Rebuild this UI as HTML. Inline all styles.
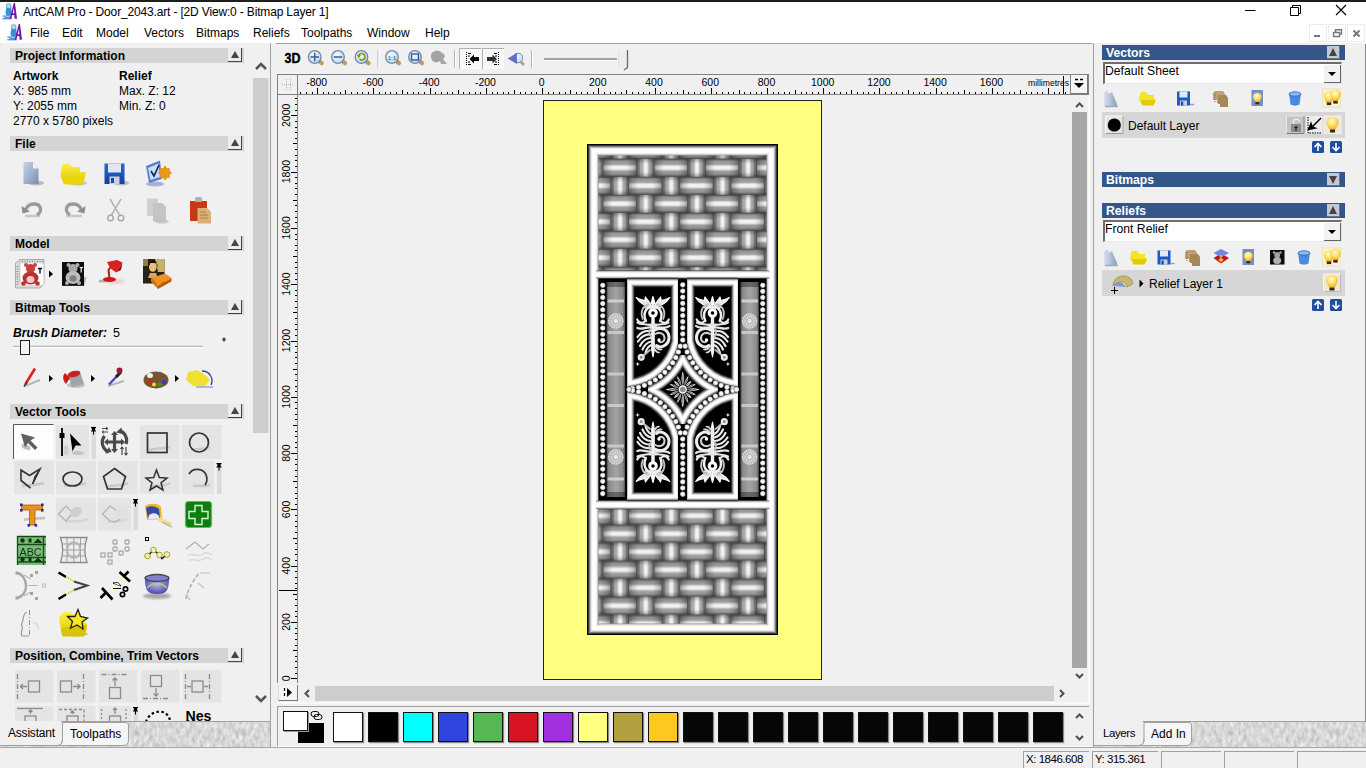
<!DOCTYPE html>
<html><head><meta charset="utf-8"><title>ArtCAM Pro - Door_2043.art</title>
<style>
*{box-sizing:border-box;margin:0;padding:0}
html,body{width:1366px;height:768px;overflow:hidden;background:#f0f0f0;font-family:"Liberation Sans",sans-serif;font-size:12px;color:#000}
.abs{position:absolute}
svg{position:absolute;overflow:visible}
#topline{left:0;top:0;width:1366px;height:2px;background:#1e1e1e}
#titlebar{left:0;top:2px;width:1366px;height:21px;background:#fff}
#menubar{left:0;top:23px;width:1366px;height:20px;background:#fff}
#title{left:23px;top:5px;font-size:12px;white-space:nowrap;letter-spacing:-0.16px}
.menu{top:26px;font-size:12px;white-space:nowrap}
#leftpanel{left:0;top:43px;width:271px;height:680px;background:#f0f0f0;border-right:1px solid #a0a0a0;overflow:hidden}
.hdr{position:absolute;left:10px;width:234px;height:15px;background:#d4d4d4;font-weight:bold;font-size:12px;line-height:16px;padding-left:5px;white-space:nowrap}
.hbtn{position:absolute;right:2px;top:0;width:14px;height:14px;background:#ececec;border-right:1px solid #444;border-bottom:1px solid #444}
.hbtn:after{content:"";position:absolute;left:2.5px;top:3px;border-left:4px solid transparent;border-right:4px solid transparent;border-bottom:7.5px solid #444}
.t{position:absolute;white-space:nowrap;font-size:12px;line-height:14px}
.b{font-weight:bold}
.tb{position:absolute;width:38px;height:33px;background:#e2e2e2}
</style></head><body>
<div id="topline" class="abs"></div>
<div id="titlebar" class="abs"></div>
<div id="menubar" class="abs"></div>
<div id="title" class="abs">ArtCAM Pro - Door_2043.art - [2D View:0 - Bitmap Layer 1]</div>
<div class="abs menu" style="left:30px">File</div>
<div class="abs menu" style="left:62px">Edit</div>
<div class="abs menu" style="left:96px">Model</div>
<div class="abs menu" style="left:144px">Vectors</div>
<div class="abs menu" style="left:196px">Bitmaps</div>
<div class="abs menu" style="left:253px">Reliefs</div>
<div class="abs menu" style="left:301px">Toolpaths</div>
<div class="abs menu" style="left:367px">Window</div>
<div class="abs menu" style="left:425px">Help</div>
<svg style="left:0;top:0" width="30" height="44">
<defs><filter id="b0" x="-20%" y="-20%" width="140%" height="140%"><feGaussianBlur stdDeviation="0.4"/></filter>
<g id="appic">
 <path d="M4.500 1.500C4.500 0 9.500 0 9.500 1.500V7C10.500 9 10 11 8.500 12.500V15.500H2.500V13.500H0.500V12.500H4.500C3.500 10 3.500 8 4.500 6Z" fill="#3c8cdc"/>
 <ellipse cx="7" cy="3" rx="2" ry="2.300" fill="#a8e0d8"/>
 <rect x="3.500" y="12.700" width="4.500" height="1.500" fill="#9cc8f0"/>
 <path d="M0.500 15.800H10" stroke="#2878d0" stroke-width="1"/>
 <path d="M13.200 0L15.200 15.800H12.800L12.500 12H10.500L9.500 15.800H7.800L12 0Z" fill="#7018a0"/>
 <path d="M12.200 5L10.900 10.300H12.500Z" fill="#fff"/>
</g></defs>
<g filter="url(#b0)"><use href="#appic" x="1.800" y="3"/><use href="#appic" x="6.800" y="24"/></g>
</svg>
<div id="leftpanel" class="abs">
 <div class="hdr" style="top:5px">Project Information<span class="hbtn"></span></div>
 <div class="t b" style="left:13px;top:26px">Artwork</div>
 <div class="t b" style="left:119px;top:26px">Relief</div>
 <div class="t" style="left:13px;top:41px">X: 985 mm</div>
 <div class="t" style="left:119px;top:41px">Max. Z: 12</div>
 <div class="t" style="left:13px;top:56px">Y: 2055 mm</div>
 <div class="t" style="left:119px;top:56px">Min. Z: 0</div>
 <div class="t" style="left:13px;top:71px">2770 x 5780 pixels</div>
 <div class="hdr" style="top:93px">File<span class="hbtn"></span></div>
 <div class="hdr" style="top:193px">Model<span class="hbtn"></span></div>
 <div class="hdr" style="top:257px">Bitmap Tools<span class="hbtn"></span></div>
 <div class="hdr" style="top:361px">Vector Tools<span class="hbtn"></span></div>
 <div class="hdr" style="top:605px">Position, Combine, Trim Vectors<span class="hbtn"></span></div>
 <div class="t" style="left:13px;top:283px;font-size:12.1px"><b><i>Brush Diameter:</i></b></div>
 <div class="t" style="left:113px;top:283px;font-size:12.5px">5</div>
</div>
<svg id="licons" style="left:0;top:0;overflow:hidden" width="270" height="721" font-family="Liberation Sans, sans-serif">
<defs>
 <filter id="b1" x="-20%" y="-20%" width="140%" height="140%"><feGaussianBlur stdDeviation="0.5"/></filter>
 <filter id="b2" x="-30%" y="-30%" width="160%" height="160%"><feGaussianBlur stdDeviation="1.2"/></filter>
 <linearGradient id="gdoc" x1="0" y1="0" x2="1" y2="1"><stop offset="0" stop-color="#c8d4e6"/><stop offset="1" stop-color="#7890b4"/></linearGradient>
 <linearGradient id="gyel" x1="0" y1="0" x2="0" y2="1"><stop offset="0" stop-color="#fff040"/><stop offset="1" stop-color="#d8c800"/></linearGradient>
 <linearGradient id="gblu" x1="0" y1="0" x2="0" y2="1"><stop offset="0" stop-color="#2a6ad8"/><stop offset="1" stop-color="#1040a0"/></linearGradient>
 <radialGradient id="gdish" cx=".5" cy=".4" r=".6"><stop offset="0" stop-color="#b8b8f0"/><stop offset="1" stop-color="#4848b0"/></radialGradient>
 <g id="pin"><path d="M0.500 0H5.500V1.300H4.500V3.600H5.500V4.600H3.500V7.500H2.500V4.600H0.500V3.600H1.500V1.300H0.500Z" fill="#000"/></g>
 <g id="tri"><path d="M0 0L4 3.500L0 7Z" fill="#000"/></g>
</defs>
<!-- scrollbar -->
<rect x="253" y="78" width="15.500" height="355" fill="#cdcdcd"/>
<path d="M256 69L261 64L266 69M256 696L261 701L266 696" fill="none" stroke="#555" stroke-width="2.500"/>

<!-- FILE row 1 -->
<g filter="url(#b1)">
 <ellipse cx="36" cy="183" rx="8" ry="2.500" fill="#999" opacity=".6"/>
 <path d="M23.500 162H33L38.500 168.500V184H23.500Z" fill="url(#gdoc)"/>
 <path d="M33 162V168.500H38.500Z" fill="#eef2f8"/>
 <ellipse cx="78" cy="183" rx="9" ry="2.500" fill="#999" opacity=".5"/>
 <path d="M62 165.500C64 163 68 162.500 70 164.500L72 167H80V172H86L83 184H64L60.500 176Z" fill="url(#gyel)"/>
 <path d="M63 177H85L82 184.500H65Z" fill="#e8d800"/>
 <ellipse cx="121" cy="183" rx="8" ry="2.500" fill="#999" opacity=".6"/>
 <path d="M104.500 163.500H124.500V184H104.500Z" fill="url(#gblu)"/>
 <rect x="108" y="163.500" width="13" height="9" fill="#dfe6f2"/>
 <rect x="109.500" y="176.500" width="10" height="7.500" fill="#c8d0dc"/><rect x="111" y="178" width="3" height="5" fill="#1a4ab0"/>
 <ellipse cx="155" cy="184" rx="9" ry="2.500" fill="#8898c0" opacity=".7"/>
 <path d="M146 166L160 160.500L162 179L149 183Z" fill="#5a7fd0"/>
 <path d="M148 168L158.500 163.500L160 177L150.500 180Z" fill="#c8dcf4"/>
 <path d="M151 171L154 176L159 165" fill="none" stroke="#102060" stroke-width="1.600"/>
 <circle cx="165" cy="173" r="5.500" fill="#e89818"/><circle cx="165" cy="173" r="2" fill="#7a4a08"/>
 <path d="M165 166V180M158.500 173H171.500M160.500 168.500L169.500 177.500M169.500 168.500L160.500 177.500" stroke="#e89818" stroke-width="2.200"/>
</g>
<!-- FILE row 2 -->
<g filter="url(#b1)">
 <path d="M25 216H40" stroke="#c8c8c8" stroke-width="2.500"/>
 <path d="M37 215C43 211 41 204 34 204C29 204 26 207 25.500 211" fill="none" stroke="#9a9a9a" stroke-width="3.300"/>
 <path d="M21.500 206L22.500 213.500L30 211.500Z" fill="#8e8e8e"/>
 <path d="M66 216H82" stroke="#c8c8c8" stroke-width="2.500"/>
 <path d="M70 215C64 211 66 204 73 204C78 204 81 207 81.500 211" fill="none" stroke="#9a9a9a" stroke-width="3.300"/>
 <path d="M85.500 206L84.500 213.500L77 211.500Z" fill="#8e8e8e"/>
 <path d="M110 199L119.500 215M121 199L111.500 215" stroke="#b4b4b4" stroke-width="1.500"/>
 <circle cx="110.500" cy="218" r="2.800" fill="none" stroke="#a8a8a8" stroke-width="1.400"/><circle cx="121" cy="218" r="2.800" fill="none" stroke="#a8a8a8" stroke-width="1.400"/>
 <path d="M147 198.500H158V216H147Z" fill="#cfcfcf"/><path d="M153 203H162L166 207V221.500H153Z" fill="#c4c4c4"/>
 <ellipse cx="162" cy="221.500" rx="7" ry="2" fill="#bbb" opacity=".7"/>
 <path d="M190 201H207V221H190Z" fill="#c83818"/><rect x="195" y="197" width="7" height="5" rx="1.500" fill="#b0b0b8"/>
 <path d="M197.500 208H207L211 212V223.500H197.500Z" fill="#d8b078"/>
 <path d="M200 212H206M200 215H208M200 218H208" stroke="#a07840" stroke-width=".8"/>
</g>
<!-- MODEL -->
<g filter="url(#b1)">
 <path d="M15.500 263L20 259.500H44V284L40 288H15.500Z" fill="#dcdcdc" stroke="#9a9a9a" stroke-width=".8"/>
 <path d="M20 259.500V284H44" fill="none" stroke="#b0b0b0" stroke-width=".8"/>
 <path d="M22 261.500H43M17.500 266V286" stroke="#888" stroke-width="1.600" stroke-dasharray="1 1.500"/>
 <rect x="20.500" y="263.500" width="23" height="21.500" fill="#fff"/>
 <circle cx="30.500" cy="268.500" r="4.600" fill="#c84040"/><circle cx="26" cy="265" r="2" fill="#c84040"/><circle cx="35" cy="265" r="2" fill="#c84040"/>
 <ellipse cx="30.500" cy="278" rx="8" ry="6.500" fill="#b83030"/><ellipse cx="30.500" cy="279.500" rx="4" ry="3.500" fill="#f8c8c8"/>
 <circle cx="23.500" cy="283.500" r="2.300" fill="#b83030"/><circle cx="37.500" cy="283.500" r="2.300" fill="#b83030"/>
 <path d="M38 268.500H42M40 268.500V273.500" stroke="#000" stroke-width="1.300"/>
 <path d="M84 277L87 277L84 286Z" fill="#bbb"/>
 <rect x="62" y="262" width="22" height="23.800" fill="#080808"/>
 <circle cx="73" cy="268.500" r="4.600" fill="#a8a8a8"/><circle cx="68.500" cy="265" r="2" fill="#b0b0b0"/><circle cx="77.500" cy="265" r="2" fill="#b0b0b0"/>
 <ellipse cx="73" cy="277.500" rx="7.500" ry="6.500" fill="#bcbcbc"/><ellipse cx="73" cy="278.500" rx="3.500" ry="3.300" fill="#808080"/>
 <circle cx="67" cy="283" r="2" fill="#b0b0b0"/><circle cx="79" cy="283" r="2" fill="#b0b0b0"/>
 <path d="M79.500 267.500H83M81.200 267.500V272.500" stroke="#fff" stroke-width="1.200"/>
 <ellipse cx="115" cy="281.500" rx="10" ry="2.500" fill="#e8c8c8" opacity=".8" filter="url(#b2)"/>
 <ellipse cx="102.500" cy="281" rx="4" ry="1.500" fill="#888" opacity=".6"/>
 <ellipse cx="109.500" cy="279.500" rx="6.500" ry="2.500" fill="#d01818"/>
 <path d="M109.500 278.500L108.500 270L112 265" fill="none" stroke="#b81818" stroke-width="2"/>
 <path d="M107 262L117 260L122.500 262.500L116 272.500L110 268Z" fill="#d82020"/>
 <path d="M116 272.500L122.500 262.500L121 270Z" fill="#901010"/>
 <rect x="143" y="259" width="21.500" height="24.500" fill="#2a2214"/>
 <path d="M155 259H164.500V272H158Z" fill="#c8b468"/><path d="M143 259H148V266H143Z" fill="#8a8048"/>
 <ellipse cx="152.800" cy="267" rx="3.800" ry="4.800" fill="#e8c080"/><path d="M150 273H156L158 278H148Z" fill="#d8a868"/>
 <path d="M148.500 268C147.500 258 158.500 258 157.500 268L156.500 263H150Z" fill="#1a1008"/>
 <path d="M151 278L165 273.500L171.500 278L158 285.500Z" fill="#f09028"/><path d="M158 285.500L171.500 278V281.500L158 289Z" fill="#b86010"/><path d="M151 278V281.500L158 289V285.500Z" fill="#d07818"/>
</g>
<use href="#tri" x="49" y="270.500"/>
<!-- BITMAP TOOLS -->
<path d="M13 346.500H203" stroke="#b8b8b8" stroke-width="1.500"/><path d="M13 347.500H203" stroke="#fff" stroke-width="1"/>
<rect x="20.500" y="340.500" width="9" height="14" fill="#f4f4f4" stroke="#222" stroke-width="1"/>
<path d="M224 337L226 339.500L224 342L222 339.500Z" fill="#38507a"/>
<g filter="url(#b1)">
 <path d="M25 386L40 380" stroke="#b8b8b8" stroke-width="2"/>
 <path d="M25.500 384L35 368.500" stroke="#d82020" stroke-width="2.600"/><path d="M24 386.500L26.500 382.500" stroke="#333" stroke-width="1.500"/>
 <ellipse cx="76" cy="385" rx="9" ry="3" fill="#aaa" opacity=".7"/>
 <path d="M68 375L80 372L84 384L72 387Z" fill="#9aa8a8"/><ellipse cx="74" cy="374" rx="6.500" ry="3" fill="#c82020" transform="rotate(-14 74 374)"/>
 <path d="M65 373C62 376 63 381 66 384L70 378Z" fill="#d01818"/>
 <path d="M108 386L124 381" stroke="#b8b8b8" stroke-width="2"/>
 <path d="M109 384.500L118 375" stroke="#4848c0" stroke-width="2.400"/><path d="M116 377L121 372" stroke="#222" stroke-width="3"/><circle cx="119.500" cy="370.500" r="3" fill="#a01838"/>
 <ellipse cx="156" cy="380" rx="12.500" ry="8.500" fill="#7a5230"/><ellipse cx="150" cy="375.500" rx="3" ry="2.500" fill="#f0f0f0"/>
 <circle cx="149" cy="382.500" r="2" fill="#e02020"/><circle cx="154" cy="384.500" r="2" fill="#f0d820"/><circle cx="159.500" cy="384.500" r="2" fill="#28a028"/><circle cx="164" cy="382" r="2" fill="#2040d8"/>
 <path d="M188 372L197 370L204 374L210 380L204 387L193 386L186 380Z" fill="#f0e030"/>
 <path d="M202 371C210 371 214 379 211 385" fill="none" stroke="#3040a0" stroke-width="1.300"/>
 <path d="M196 387H213" stroke="#a0a8d0" stroke-width="1.500"/>
</g>
<use href="#tri" x="49" y="375"/><use href="#tri" x="91" y="375"/><use href="#tri" x="175" y="375"/>
<!-- VECTOR TOOLS row1 -->
<rect x="13.500" y="424.500" width="40" height="34.500" fill="#fdfdfd" stroke="none"/>
<path d="M13.500 459V424.500H53.500" fill="none" stroke="#555" stroke-width="1"/>
<rect x="56" y="425" width="33" height="34" fill="#e4e4e4"/>
<rect x="91.500" y="426" width="4.500" height="33" fill="#dadada"/>
<rect x="140" y="425" width="39.500" height="34" fill="#e4e4e4"/>
<rect x="182" y="425" width="39.500" height="34" fill="#e4e4e4"/>
<g filter="url(#b1)">
 <ellipse cx="26" cy="447" rx="5" ry="2.500" fill="#c0c0c0" transform="rotate(25 26 447)"/>
 <path d="M21 433.500L35 437.500L30.500 440.500L37.500 447.500L35 450L28 443L25 447.500Z" fill="#606060"/>
 <ellipse cx="78" cy="453" rx="6" ry="2" fill="#c4c4c4"/><ellipse cx="66" cy="450" rx="2.500" ry="5" fill="#cfcfcf"/>
 <path d="M62 428V456" stroke="#000" stroke-width="1.800"/><rect x="59.500" y="433" width="5" height="5" fill="#000"/>
 <path d="M70 433.500L81.500 445.500L75.500 445.500L72.500 451.500Z" fill="#000"/>
 <g stroke="#4a4a4a" fill="none" stroke-width="3.200">
  <path d="M104.500 436A10.500 10.500 0 0 0 108.500 452"/><path d="M119.500 430.500A10.500 10.500 0 0 1 126 444"/>
 </g>
 <path d="M105 453.500L111.500 452L109 447Z M116 432.500L121.500 427.500L122.500 434Z" fill="#4a4a4a"/>
 <path d="M114.500 433.500V450.500M106.500 442H122.500" stroke="#4a4a4a" stroke-width="3.200"/>
 <path d="M114.500 431L118 435H111Z M114.500 453L118 449H111Z M104 442L108 438.500V445.500Z M125 442L121 438.500V445.500Z" fill="#4a4a4a"/>
 <path d="M102 428.500H108M106 427L108 428.500L106 430M108 432H102M104 430.500L102 432L104 433.500" stroke="#4a4a4a" stroke-width="1" fill="none"/>
 <path d="M122 447V455M120.500 449L122 447L123.500 449M126 455V447M124.500 453L126 455L127.500 453" stroke="#4a4a4a" stroke-width="1.200" fill="none"/>
 <path d="M149 450C156 448 164 449 170 447" stroke="#c8c8c8" stroke-width="2.500" fill="none"/>
 <rect x="147.500" y="433" width="19.500" height="19.500" fill="none" stroke="#333" stroke-width="1.700"/>
 <path d="M191 450C198 448 204 450 210 447" stroke="#c8c8c8" stroke-width="2.500" fill="none"/>
 <circle cx="199" cy="442.500" r="9.500" fill="none" stroke="#333" stroke-width="1.700"/>
</g>
<use href="#pin" x="90.500" y="427"/>
<!-- row2 -->
<rect x="14" y="461" width="40" height="33" fill="#e4e4e4"/>
<rect x="56" y="461" width="40" height="33" fill="#e4e4e4"/>
<rect x="98" y="461" width="39.500" height="33" fill="#e4e4e4"/>
<rect x="140" y="461" width="39.500" height="33" fill="#e4e4e4"/>
<rect x="182" y="461" width="32" height="33" fill="#e4e4e4"/>
<rect x="217" y="463" width="4.500" height="31" fill="#dadada"/>
<g filter="url(#b1)">
 <path d="M22 486C28 484 36 486 44 483" stroke="#c8c8c8" stroke-width="2.500" fill="none"/>
 <path d="M30.500 488L21 480.500V470L29.500 475.500L40 469L32.500 484" fill="none" stroke="#333" stroke-width="1.600"/>
 <path d="M39 471L32.500 484L35 476Z" fill="#333" stroke="#333" stroke-width="1"/>
 <path d="M64 486C70 484 78 487 86 483" stroke="#c8c8c8" stroke-width="2.500" fill="none"/>
 <ellipse cx="72.500" cy="479" rx="9.500" ry="7" fill="none" stroke="#333" stroke-width="1.700"/>
 <path d="M106 487C113 484 121 487 128 483" stroke="#c8c8c8" stroke-width="2.500" fill="none"/>
 <path d="M114.500 468.500L125.500 476.500L121.500 489H107.500L103.500 476.500Z" fill="none" stroke="#333" stroke-width="1.700"/>
 <path d="M150 487C156 484 164 487 170 483" stroke="#c8c8c8" stroke-width="2.500" fill="none"/>
 <path d="M156.500 470L159.300 477.500L167 478L161 482.800L163 490L156.500 486L150 490L152 482.800L146 478L153.700 477.500Z" fill="none" stroke="#333" stroke-width="1.500"/>
 <path d="M193 486C198 485 204 487 210 485" stroke="#c8c8c8" stroke-width="2.500" fill="none"/>
 <path d="M189 474C193 467 204 468 206.500 476C207.500 480 206.500 483 205 485" fill="none" stroke="#333" stroke-width="1.700"/>
</g>
<use href="#pin" x="216" y="463"/>
<!-- row3 -->
<rect x="56" y="498" width="40" height="32.500" fill="#e4e4e4"/>
<rect x="98" y="498" width="33" height="32.500" fill="#e4e4e4"/>
<rect x="133.500" y="500" width="4.500" height="30" fill="#dadada"/>
<g filter="url(#b1)">
 <path d="M24 520C30 518 38 519 45 518" stroke="#c0c0c0" stroke-width="2.500" fill="none"/>
 <path d="M21.500 505H42.500V510H35V525H29.500V510H21.500Z" fill="#e89020" stroke="#a85a08" stroke-width=".8"/>
 <g fill="#2828a8"><rect x="20" y="503.500" width="2.600" height="2.600"/><rect x="41" y="503.500" width="2.600" height="2.600"/><rect x="20" y="509" width="2.600" height="2.600"/><rect x="41" y="509" width="2.600" height="2.600"/><rect x="27.500" y="524" width="2.600" height="2.600"/><rect x="34.500" y="524" width="2.600" height="2.600"/></g>
 <path d="M66 522C72 520 80 523 88 519" stroke="#d4d4d4" stroke-width="2.500" fill="none"/>
 <path d="M58.500 514L66 506L73 513L66 521Z" fill="none" stroke="#b4b4b4" stroke-width="1.300"/><ellipse cx="76" cy="512" rx="6" ry="4.500" fill="#cfcfcf" transform="rotate(-30 76 512)"/>
 <path d="M108 522C114 520 120 523 128 519" stroke="#d8d8d8" stroke-width="2.500" fill="none"/>
 <path d="M102.500 514L110 506L120 513V519C116 523 112 522 110 521Z" fill="none" stroke="#b4b4b4" stroke-width="1.300"/><ellipse cx="121" cy="513" rx="6" ry="6" fill="#e0e0e0"/>
 <path d="M145 506C150 503 158 503 161 507L162 519L147 520Z" fill="#e8b820"/><path d="M146 508C150 505 156 506 159 509L160 518L148 519Z" fill="#3848a0"/>
 <path d="M149 515C153 512 157 513 159 516L159.500 518.500L148 519.500Z" fill="#e8e8f0"/>
 <path d="M160 517L172 523L170 527L158 521Z" fill="#f0e088"/><path d="M162 522L172 527" stroke="#b8b8b8" stroke-width="1.500"/>
 <rect x="185.500" y="501.500" width="26" height="26" rx="3" fill="#0e7e0e" stroke="#58c058" stroke-width="1.200"/>
 <path d="M195 505.500H202V511.500H208V518.500H202V524.500H195V518.500H189V511.500H195Z" fill="none" stroke="#d8f8d8" stroke-width="1.400"/>
</g>
<use href="#pin" x="132.500" y="499"/>
<!-- row4 -->
<g filter="url(#b1)">
 <rect x="17" y="536" width="29" height="29" fill="#78bc78"/>
 <path d="M17 536.500H46M17 544.500H46M17 557.500H46M17 562H46M43.500 536V565M17.500 536V565" stroke="#184818" stroke-width="1.300"/>
 <circle cx="22.500" cy="540.500" r="2.200" fill="#103810"/><rect x="28.500" y="538.500" width="3" height="4" fill="#103810"/><path d="M33.500 543L38 538.500L42.500 543Z" fill="#103810"/>
 <circle cx="22.500" cy="559.500" r="2.200" fill="#103810"/><rect x="28.500" y="557.500" width="3" height="4" fill="#103810"/><path d="M33.500 562L38 557.500L42.500 562Z" fill="#103810"/>
 <text x="19.500" y="555.500" font-size="10" fill="#0c300c" textLength="22" lengthAdjust="spacingAndGlyphs">ABC</text>
 <path d="M60.500 537.500H87C84 546 84 554 87 562.500H60.500C63.500 554 63.500 546 60.500 537.500Z" fill="#ececec" stroke="#8a8a8a" stroke-width="1.300"/>
 <path d="M67 538V562M73.800 538V562M80.500 538V562M62.500 544H85M62.500 550H85M62.500 556H85" stroke="#a0a0a0" stroke-width="1"/>
 <ellipse cx="73.800" cy="550" rx="6.500" ry="8" fill="none" stroke="#b0b0b0" stroke-width="1.600"/>
 <g fill="none" stroke="#a8a8a8" stroke-width="1.300"><rect x="101" y="553" width="4" height="4"/><rect x="108" y="553" width="4" height="4"/><rect x="108" y="560" width="4" height="4"/><rect x="113" y="540" width="4" height="4" rx="1"/><rect x="125" y="540" width="4" height="4" rx="1"/><rect x="113" y="547" width="4" height="4" rx="1"/><rect x="125" y="547" width="4" height="4" rx="1"/><rect x="119" y="551" width="4" height="4" rx="1"/></g>
 <rect x="145.500" y="537.500" width="3" height="3" fill="#fff" stroke="#000" stroke-width="1"/>
 <path d="M147.500 556L153.500 550L159.500 555L162 558.500L167 554.500" fill="none" stroke="#222" stroke-width="1.600"/>
 <g fill="#f4f4a0" stroke="#8a8a20" stroke-width=".8"><circle cx="147.500" cy="556" r="2.800"/><circle cx="153.500" cy="550" r="2.800"/><circle cx="159.500" cy="555" r="2.800"/><circle cx="167" cy="554.500" r="2.800"/></g>
 <path d="M186 549L195 542L203 549L209 544" fill="none" stroke="#b0b0b0" stroke-width="1.300"/>
 <path d="M188 556C193 552 198 558 203 554S210 556 212 554M188 561C193 557 198 563 203 559S210 561 212 559" fill="none" stroke="#d8d8d8" stroke-width="1.300"/>
</g>
<!-- row5 -->
<g filter="url(#b1)">
 <path d="M17 573C28 575 30 595 17 598" fill="none" stroke="#a8a8a8" stroke-width="2.400"/>
 <path d="M24 575L31 579M24 596L31 592M28 585.500H38" stroke="#b8b8b8" stroke-width="1.200"/>
 <g fill="#a4a4a4"><rect x="15.500" y="571.500" width="3" height="3"/><rect x="15.500" y="596.500" width="3" height="3"/><rect x="30" y="574" width="3" height="3"/><rect x="35" y="571" width="3" height="3"/><rect x="30" y="592" width="3" height="3"/><rect x="35" y="597" width="3" height="3"/></g>
 <rect x="42.500" y="584" width="3" height="3" fill="none" stroke="#b0b0b0" stroke-width=".8"/>
 <path d="M58.500 572.500L66 577M58.500 599L66 594.500" stroke="#000" stroke-width="2.600"/>
 <path d="M66 577L74 581.500M66 594.500L74 590" stroke="#f4f4a0" stroke-width="2.600"/>
 <path d="M66 577L74 581.500M66 594.500L74 590" stroke="#555" stroke-width=".8" stroke-dasharray="1 1.500"/>
 <path d="M74 581.500L87 585.500L74 590" fill="none" stroke="#444" stroke-width="2.200"/>
 <path d="M112 591L126 576" stroke="#f8f8b8" stroke-width="3"/>
 <path d="M119.500 572L130 581.500M128.500 571.500L123 577" stroke="#000" stroke-width="2.600"/>
 <path d="M102 588L112.500 599.500M100.500 598L106.500 592" stroke="#000" stroke-width="2.600"/>
 <path d="M113 583L121 586M113 588.500H121" stroke="#000" stroke-width="1.100"/><path d="M113 583L118 582.500L121 586" fill="#fff" stroke="#000" stroke-width=".8"/>
 <circle cx="125.500" cy="589" r="2.200" fill="none" stroke="#000" stroke-width="1.700"/><circle cx="122.500" cy="594.500" r="2.200" fill="none" stroke="#000" stroke-width="1.700"/>
 <ellipse cx="157" cy="596" rx="14" ry="3" fill="#888" opacity=".7" filter="url(#b2)"/>
 <path d="M145 578C145 590 147 594 157 594S169 590 169 578Z" fill="url(#gdish)"/>
 <ellipse cx="157" cy="578" rx="12" ry="3.500" fill="#8080d0" stroke="#404858" stroke-width="1.300"/>
 <path d="M147 588C152 582 162 582 167 588" fill="none" stroke="#c8c860" stroke-width="1.300"/>
 <path d="M186 599C188 588 194 580 199 573" fill="none" stroke="#b0b0b0" stroke-width="1.600" stroke-dasharray="4 2"/>
 <path d="M200 573H210M198 583L204 588M186 594L190 600" stroke="#c0c0c0" stroke-width="1.200"/>
</g>
<!-- row6 -->
<g filter="url(#b1)">
 <path d="M29.500 610V637" stroke="#909090" stroke-width="1" stroke-dasharray="5 2 1 2"/>
 <path d="M27 612C22 614 24 620 22 623C20 626 24 627 22 630C21 633 21 635 22 636H29" fill="none" stroke="#9a9a9a" stroke-width="1.200"/>
 <path d="M33 623C37 622 39 626 38 630" fill="none" stroke="#d4d4d4" stroke-width="1.200"/>
 <ellipse cx="76" cy="634" rx="12" ry="2.500" fill="#999" opacity=".6"/>
 <path d="M59 618C61 612 68 611 72 613L87 624V629L84 636H62Z" fill="url(#gyel)"/>
 <path d="M61 628L87 625L84 636.500H62.500Z" fill="#d8c400"/>
 <path d="M78 609.500L80.500 616.500L87.500 618L82 622L83 629L77 625L70.500 628L72.500 621.500L67.500 616.500L75 616.500Z" fill="#f8e820" stroke="#222" stroke-width="1.300"/>
</g>
<!-- POSITION row -->
<g>
 <rect x="15" y="670" width="38.500" height="32.500" fill="#e4e4e4"/><rect x="57" y="670" width="38.500" height="32.500" fill="#e4e4e4"/><rect x="99" y="670" width="38.500" height="32.500" fill="#e4e4e4"/><rect x="141" y="670" width="38.500" height="32.500" fill="#e4e4e4"/><rect x="183" y="670" width="38.500" height="32.500" fill="#e4e4e4"/>
 <rect x="15" y="706" width="38.500" height="16" fill="#e4e4e4"/><rect x="57" y="706" width="38.500" height="16" fill="#e4e4e4"/><rect x="99" y="706" width="32" height="16" fill="#e4e4e4"/><rect x="133.500" y="708" width="4.500" height="14" fill="#dadada"/>
</g>
<g filter="url(#b1)" fill="none" stroke="#8a8a8a" stroke-width="1.300">
 <path d="M17.500 674V700" stroke-dasharray="5 2 1 2"/><rect x="28.500" y="681" width="11" height="11"/><path d="M27 686.500H20.500M23 684L20.500 686.500L23 689"/>
 <path d="M83.500 674V700" stroke-dasharray="5 2 1 2"/><rect x="60.500" y="681" width="11" height="11"/><path d="M73 686.500H80M77.500 684L80 686.500L77.500 689"/>
 <path d="M101.500 674.500H127" stroke-dasharray="5 2 1 2"/><rect x="109.500" y="687.500" width="11" height="11"/><path d="M115 686V678M112.500 680.500L115 678L117.500 680.500"/>
 <path d="M143 698.500H168" stroke-dasharray="5 2 1 2"/><rect x="150.500" y="675.500" width="11" height="11"/><path d="M156 688V696M153.500 693.500L156 696L158.500 693.500"/>
 <path d="M185.500 674V700M209.500 674V700" stroke-dasharray="5 2 1 2"/><rect x="192" y="681" width="11" height="11"/><path d="M187 686.500H191M204 686.500H208"/>
 <path d="M17 708.500H43" /><rect x="25" y="716" width="11" height="11"/><path d="M30.500 714V710M28.500 712L30.500 710L32.500 712"/>
 <path d="M59 709.500H84V722" stroke-dasharray="3 2"/><rect x="67" y="716" width="11" height="11"/><path d="M72.500 714V711M70.500 713L72.500 711L74.500 713"/>
 <path d="M101.500 709V722M126 709V722" stroke-dasharray="2 2"/><rect x="109.500" y="716" width="11" height="11"/><path d="M115 714V708M113 710L115 708L117 710"/>
</g>
<use href="#pin" x="132.500" y="707"/>
<path d="M146 722C148 714 158 709 165 713C168 715 170 718 170 722" fill="none" stroke="#000" stroke-width="2.200" stroke-dasharray="2.500 2.500"/>
<text x="185.500" y="720.800" font-size="15" font-weight="bold" fill="#000" textLength="26" lengthAdjust="spacingAndGlyphs">Nes</text>
<text x="185.500" y="729.500" font-size="15" font-weight="bold" fill="#000" textLength="26" lengthAdjust="spacingAndGlyphs">Nes</text>

</svg>
<div class="abs" style="left:276px;top:43px;width:816px;height:1px;background:#a0a0a0"></div>
<div class="abs" style="left:1093px;top:43px;width:1px;height:704px;background:#a0a0a0"></div>
<svg id="rulers" style="left:0;top:0" width="1366" height="768" font-family="Liberation Sans, sans-serif" font-size="10.5">
<g fill="none" stroke="#828282" stroke-width="1" shape-rendering="crispEdges">
<path d="M277.5 683 V74.5 H1088.5 M297.5 74.5 V683 M277.5 94.5 H1088.5 M1070.5 74.5 V94.5 M1088.5 74.5V94.5"/>
</g>
<g stroke="#000" stroke-width="1" shape-rendering="crispEdges">
<path d="M300.5 92V94"/>
<path d="M306.5 92V94"/>
<path d="M312.5 92V94"/>
<path d="M317.5 88V94"/>
<path d="M323.5 92V94"/>
<path d="M328.5 92V94"/>
<path d="M334.5 92V94"/>
<path d="M340.5 92V94"/>
<path d="M345.5 90V94"/>
<path d="M351.5 92V94"/>
<path d="M357.5 92V94"/>
<path d="M362.5 92V94"/>
<path d="M368.5 92V94"/>
<path d="M373.5 88V94"/>
<path d="M379.5 92V94"/>
<path d="M385.5 92V94"/>
<path d="M390.5 92V94"/>
<path d="M396.5 92V94"/>
<path d="M402.5 90V94"/>
<path d="M407.5 92V94"/>
<path d="M413.5 92V94"/>
<path d="M418.5 92V94"/>
<path d="M424.5 92V94"/>
<path d="M430.5 88V94"/>
<path d="M435.5 92V94"/>
<path d="M441.5 92V94"/>
<path d="M447.5 92V94"/>
<path d="M452.5 92V94"/>
<path d="M458.5 90V94"/>
<path d="M463.5 92V94"/>
<path d="M469.5 92V94"/>
<path d="M475.5 92V94"/>
<path d="M480.5 92V94"/>
<path d="M486.5 88V94"/>
<path d="M492.5 92V94"/>
<path d="M497.5 92V94"/>
<path d="M503.5 92V94"/>
<path d="M508.5 92V94"/>
<path d="M514.5 90V94"/>
<path d="M520.5 92V94"/>
<path d="M525.5 92V94"/>
<path d="M531.5 92V94"/>
<path d="M536.5 92V94"/>
<path d="M542.5 88V94"/>
<path d="M548.5 92V94"/>
<path d="M553.5 92V94"/>
<path d="M559.5 92V94"/>
<path d="M565.5 92V94"/>
<path d="M570.5 90V94"/>
<path d="M576.5 92V94"/>
<path d="M581.5 92V94"/>
<path d="M587.5 92V94"/>
<path d="M593.5 92V94"/>
<path d="M598.5 88V94"/>
<path d="M604.5 92V94"/>
<path d="M610.5 92V94"/>
<path d="M615.5 92V94"/>
<path d="M621.5 92V94"/>
<path d="M626.5 90V94"/>
<path d="M632.5 92V94"/>
<path d="M638.5 92V94"/>
<path d="M643.5 92V94"/>
<path d="M649.5 92V94"/>
<path d="M655.5 88V94"/>
<path d="M660.5 92V94"/>
<path d="M666.5 92V94"/>
<path d="M671.5 92V94"/>
<path d="M677.5 92V94"/>
<path d="M683.5 90V94"/>
<path d="M688.5 92V94"/>
<path d="M694.5 92V94"/>
<path d="M700.5 92V94"/>
<path d="M705.5 92V94"/>
<path d="M711.5 88V94"/>
<path d="M716.5 92V94"/>
<path d="M722.5 92V94"/>
<path d="M728.5 92V94"/>
<path d="M733.5 92V94"/>
<path d="M739.5 90V94"/>
<path d="M744.5 92V94"/>
<path d="M750.5 92V94"/>
<path d="M756.5 92V94"/>
<path d="M761.5 92V94"/>
<path d="M767.5 88V94"/>
<path d="M773.5 92V94"/>
<path d="M778.5 92V94"/>
<path d="M784.5 92V94"/>
<path d="M789.5 92V94"/>
<path d="M795.5 90V94"/>
<path d="M801.5 92V94"/>
<path d="M806.5 92V94"/>
<path d="M812.5 92V94"/>
<path d="M818.5 92V94"/>
<path d="M823.5 88V94"/>
<path d="M829.5 92V94"/>
<path d="M834.5 92V94"/>
<path d="M840.5 92V94"/>
<path d="M846.5 92V94"/>
<path d="M851.5 90V94"/>
<path d="M857.5 92V94"/>
<path d="M863.5 92V94"/>
<path d="M868.5 92V94"/>
<path d="M874.5 92V94"/>
<path d="M879.5 88V94"/>
<path d="M885.5 92V94"/>
<path d="M891.5 92V94"/>
<path d="M896.5 92V94"/>
<path d="M902.5 92V94"/>
<path d="M908.5 90V94"/>
<path d="M913.5 92V94"/>
<path d="M919.5 92V94"/>
<path d="M924.5 92V94"/>
<path d="M930.5 92V94"/>
<path d="M936.5 88V94"/>
<path d="M941.5 92V94"/>
<path d="M947.5 92V94"/>
<path d="M953.5 92V94"/>
<path d="M958.5 92V94"/>
<path d="M964.5 90V94"/>
<path d="M969.5 92V94"/>
<path d="M975.5 92V94"/>
<path d="M981.5 92V94"/>
<path d="M986.5 92V94"/>
<path d="M992.5 88V94"/>
<path d="M997.5 92V94"/>
<path d="M1003.5 92V94"/>
<path d="M1009.5 92V94"/>
<path d="M1014.5 92V94"/>
<path d="M1020.5 90V94"/>
<path d="M1026.5 92V94"/>
<path d="M1031.5 92V94"/>
<path d="M1037.5 92V94"/>
<path d="M1042.5 92V94"/>
<path d="M1048.5 88V94"/>
<path d="M1054.5 92V94"/>
<path d="M1059.5 92V94"/>
<path d="M1065.5 92V94"/>
<path d="M291 678.5H297"/>
<path d="M295 673.5H297"/>
<path d="M295 667.5H297"/>
<path d="M295 661.5H297"/>
<path d="M295 656.5H297"/>
<path d="M293 650.5H297"/>
<path d="M295 645.5H297"/>
<path d="M295 639.5H297"/>
<path d="M295 633.5H297"/>
<path d="M295 628.5H297"/>
<path d="M291 622.5H297"/>
<path d="M295 616.5H297"/>
<path d="M295 611.5H297"/>
<path d="M295 605.5H297"/>
<path d="M295 599.5H297"/>
<path d="M293 594.5H297"/>
<path d="M295 588.5H297"/>
<path d="M295 583.5H297"/>
<path d="M295 577.5H297"/>
<path d="M295 571.5H297"/>
<path d="M291 566.5H297"/>
<path d="M295 560.5H297"/>
<path d="M295 554.5H297"/>
<path d="M295 549.5H297"/>
<path d="M295 543.5H297"/>
<path d="M293 538.5H297"/>
<path d="M295 532.5H297"/>
<path d="M295 526.5H297"/>
<path d="M295 521.5H297"/>
<path d="M295 515.5H297"/>
<path d="M291 509.5H297"/>
<path d="M295 504.5H297"/>
<path d="M295 498.5H297"/>
<path d="M295 493.5H297"/>
<path d="M295 487.5H297"/>
<path d="M293 481.5H297"/>
<path d="M295 476.5H297"/>
<path d="M295 470.5H297"/>
<path d="M295 464.5H297"/>
<path d="M295 459.5H297"/>
<path d="M291 453.5H297"/>
<path d="M295 447.5H297"/>
<path d="M295 442.5H297"/>
<path d="M295 436.5H297"/>
<path d="M295 431.5H297"/>
<path d="M293 425.5H297"/>
<path d="M295 419.5H297"/>
<path d="M295 414.5H297"/>
<path d="M295 408.5H297"/>
<path d="M295 402.5H297"/>
<path d="M291 397.5H297"/>
<path d="M295 391.5H297"/>
<path d="M295 386.5H297"/>
<path d="M295 380.5H297"/>
<path d="M295 374.5H297"/>
<path d="M293 369.5H297"/>
<path d="M295 363.5H297"/>
<path d="M295 357.5H297"/>
<path d="M295 352.5H297"/>
<path d="M295 346.5H297"/>
<path d="M291 341.5H297"/>
<path d="M295 335.5H297"/>
<path d="M295 329.5H297"/>
<path d="M295 324.5H297"/>
<path d="M295 318.5H297"/>
<path d="M293 312.5H297"/>
<path d="M295 307.5H297"/>
<path d="M295 301.5H297"/>
<path d="M295 295.5H297"/>
<path d="M295 290.5H297"/>
<path d="M291 284.5H297"/>
<path d="M295 279.5H297"/>
<path d="M295 273.5H297"/>
<path d="M295 267.5H297"/>
<path d="M295 262.5H297"/>
<path d="M293 256.5H297"/>
<path d="M295 250.5H297"/>
<path d="M295 245.5H297"/>
<path d="M295 239.5H297"/>
<path d="M295 234.5H297"/>
<path d="M291 228.5H297"/>
<path d="M295 222.5H297"/>
<path d="M295 217.5H297"/>
<path d="M295 211.5H297"/>
<path d="M295 205.5H297"/>
<path d="M293 200.5H297"/>
<path d="M295 194.5H297"/>
<path d="M295 188.5H297"/>
<path d="M295 183.5H297"/>
<path d="M295 177.5H297"/>
<path d="M291 172.5H297"/>
<path d="M295 166.5H297"/>
<path d="M295 160.5H297"/>
<path d="M295 155.5H297"/>
<path d="M295 149.5H297"/>
<path d="M293 143.5H297"/>
<path d="M295 138.5H297"/>
<path d="M295 132.5H297"/>
<path d="M295 127.5H297"/>
<path d="M295 121.5H297"/>
<path d="M291 115.5H297"/>
<path d="M295 110.5H297"/>
<path d="M295 104.5H297"/>
<path d="M295 98.5H297"/>
<path d="M1063.5 76V94"/>
<path d="M279 590.5H297"/>
</g>
<text x="316.7" y="86" text-anchor="middle">-800</text>
<text x="372.9" y="86" text-anchor="middle">-600</text>
<text x="429.2" y="86" text-anchor="middle">-400</text>
<text x="485.4" y="86" text-anchor="middle">-200</text>
<text x="541.6" y="86" text-anchor="middle">0</text>
<text x="597.8" y="86" text-anchor="middle">200</text>
<text x="654.0" y="86" text-anchor="middle">400</text>
<text x="710.3" y="86" text-anchor="middle">600</text>
<text x="766.5" y="86" text-anchor="middle">800</text>
<text x="822.7" y="86" text-anchor="middle">1000</text>
<text x="878.9" y="86" text-anchor="middle">1200</text>
<text x="935.1" y="86" text-anchor="middle">1400</text>
<text x="991.4" y="86" text-anchor="middle">1600</text>
<text transform="translate(290 678.3) rotate(-90)" text-anchor="middle">0</text>
<text transform="translate(290 622.0) rotate(-90)" text-anchor="middle">200</text>
<text transform="translate(290 565.7) rotate(-90)" text-anchor="middle">400</text>
<text transform="translate(290 509.4) rotate(-90)" text-anchor="middle">600</text>
<text transform="translate(290 453.1) rotate(-90)" text-anchor="middle">800</text>
<text transform="translate(290 396.8) rotate(-90)" text-anchor="middle">1000</text>
<text transform="translate(290 340.5) rotate(-90)" text-anchor="middle">1200</text>
<text transform="translate(290 284.2) rotate(-90)" text-anchor="middle">1400</text>
<text transform="translate(290 227.9) rotate(-90)" text-anchor="middle">1600</text>
<text transform="translate(290 171.6) rotate(-90)" text-anchor="middle">1800</text>
<text transform="translate(290 115.3) rotate(-90)" text-anchor="middle">2000</text>
<text x="1028" y="86" font-size="9" textLength="41" lengthAdjust="spacingAndGlyphs">millimetres</text>
<g stroke="#b8b8b8" stroke-width="1" stroke-dasharray="1 1" shape-rendering="crispEdges"><path d="M282 84.5H294 M286.5 79V90 M290.5 79V90"/></g>
</svg>
<div class="abs" style="left:543px;top:100px;width:279px;height:580px;background:#ffff80;border:1px solid #222"></div>
<!--DOOR-->
<div class="abs" style="left:1071px;top:75px;width:17px;height:19px;background:#f4f4f4;border-right:1px solid #777;border-bottom:1px solid #777"></div>
<svg style="left:1071px;top:75px" width="17" height="19"><path d="M4 4.5H7M9 4.5H12" stroke="#000" stroke-width="1.3"/><path d="M3 8H13L8 13Z" fill="#000"/></svg>
<div class="abs" style="left:1072px;top:96px;width:15px;height:588px;background:#f0f0f0"></div>
<div class="abs" style="left:1072px;top:112px;width:15px;height:556px;background:#a6a6a6"></div>
<svg style="left:1072px;top:96px" width="15" height="590"><path d="M4 11L7.5 7.5L11 11 M4 578L7.5 581.5L11 578" fill="none" stroke="#505050" stroke-width="2"/></svg>
<div class="abs" style="left:315px;top:686px;width:739px;height:15px;background:#cdcdcd"></div>
<div class="abs" style="left:277px;top:702px;width:812px;height:2px;background:#f9f9f9"></div>
<div class="abs" style="left:1088px;top:95px;width:2px;height:609px;background:#f9f9f9"></div>
<svg style="left:298px;top:686px" width="780" height="15"><path d="M11 4L7.5 7.5L11 11 M762 4L765.5 7.5L762 11" fill="none" stroke="#505050" stroke-width="2"/></svg>
<div class="abs" style="left:278px;top:685px;width:20px;height:16px;background:#f4f4f4;border-right:1px solid #777;border-bottom:1px solid #777;border-left:1px solid #ddd"></div>
<svg style="left:278px;top:685px" width="20" height="16"><path d="M6.5 3V6M6.5 8V11" stroke="#000" stroke-width="1.2"/><path d="M9 3L14 7.5L9 12Z" fill="#000"/></svg>
<div class="abs" style="left:277px;top:706px;width:812px;height:41px;border-top:1px solid #a0a0a0;border-left:1px solid #a0a0a0;border-bottom:1px solid #fff"></div>
<div class="abs" style="left:298px;top:723px;width:26px;height:20px;background:#000"></div>
<div class="abs" style="left:283px;top:711px;width:25px;height:20px;background:#fff;border:1px solid #111;box-shadow:1px 1px 0 #999"></div>
<svg style="left:310px;top:710px" width="14" height="12"><rect x="1" y="1.5" width="8" height="5" rx="2.5" fill="none" stroke="#000" stroke-width="1"/><rect x="4" y="4.5" width="8" height="5" rx="2.5" fill="none" stroke="#000" stroke-width="1"/></svg>
<div class="abs" style="left:333px;top:712px;width:30px;height:30px;background:#ffffff;border:1px solid #111;box-shadow:1px 1px 1px #888"></div>
<div class="abs" style="left:368px;top:712px;width:30px;height:30px;background:#000000;border:1px solid #111;box-shadow:1px 1px 1px #888"></div>
<div class="abs" style="left:403px;top:712px;width:30px;height:30px;background:#00ffff;border:1px solid #111;box-shadow:1px 1px 1px #888"></div>
<div class="abs" style="left:438px;top:712px;width:30px;height:30px;background:#3045e0;border:1px solid #111;box-shadow:1px 1px 1px #888"></div>
<div class="abs" style="left:473px;top:712px;width:30px;height:30px;background:#55b855;border:1px solid #111;box-shadow:1px 1px 1px #888"></div>
<div class="abs" style="left:508px;top:712px;width:30px;height:30px;background:#d81424;border:1px solid #111;box-shadow:1px 1px 1px #888"></div>
<div class="abs" style="left:543px;top:712px;width:30px;height:30px;background:#a030e0;border:1px solid #111;box-shadow:1px 1px 1px #888"></div>
<div class="abs" style="left:578px;top:712px;width:30px;height:30px;background:#ffff80;border:1px solid #111;box-shadow:1px 1px 1px #888"></div>
<div class="abs" style="left:613px;top:712px;width:30px;height:30px;background:#b0a040;border:1px solid #111;box-shadow:1px 1px 1px #888"></div>
<div class="abs" style="left:648px;top:712px;width:30px;height:30px;background:#ffc81e;border:1px solid #111;box-shadow:1px 1px 1px #888"></div>
<div class="abs" style="left:683px;top:712px;width:30px;height:30px;background:#060606;border:1px solid #111;box-shadow:1px 1px 1px #888"></div>
<div class="abs" style="left:718px;top:712px;width:30px;height:30px;background:#060606;border:1px solid #111;box-shadow:1px 1px 1px #888"></div>
<div class="abs" style="left:753px;top:712px;width:30px;height:30px;background:#060606;border:1px solid #111;box-shadow:1px 1px 1px #888"></div>
<div class="abs" style="left:788px;top:712px;width:30px;height:30px;background:#060606;border:1px solid #111;box-shadow:1px 1px 1px #888"></div>
<div class="abs" style="left:823px;top:712px;width:30px;height:30px;background:#060606;border:1px solid #111;box-shadow:1px 1px 1px #888"></div>
<div class="abs" style="left:858px;top:712px;width:30px;height:30px;background:#060606;border:1px solid #111;box-shadow:1px 1px 1px #888"></div>
<div class="abs" style="left:893px;top:712px;width:30px;height:30px;background:#060606;border:1px solid #111;box-shadow:1px 1px 1px #888"></div>
<div class="abs" style="left:928px;top:712px;width:30px;height:30px;background:#060606;border:1px solid #111;box-shadow:1px 1px 1px #888"></div>
<div class="abs" style="left:963px;top:712px;width:30px;height:30px;background:#060606;border:1px solid #111;box-shadow:1px 1px 1px #888"></div>
<div class="abs" style="left:998px;top:712px;width:30px;height:30px;background:#060606;border:1px solid #111;box-shadow:1px 1px 1px #888"></div>
<div class="abs" style="left:1033px;top:712px;width:30px;height:30px;background:#060606;border:1px solid #111;box-shadow:1px 1px 1px #888"></div>
<svg style="left:1072px;top:708px" width="15" height="38"><path d="M4 10L7.5 6.5L11 10 M4 28L7.5 31.5L11 28" fill="none" stroke="#505050" stroke-width="2"/></svg>
<svg id="tbar" style="left:0;top:0" width="1100" height="72" font-family="Liberation Sans, sans-serif">
<defs>
 <radialGradient id="glens" cx=".4" cy=".35" r=".7"><stop offset="0" stop-color="#f4fbff"/><stop offset="1" stop-color="#b4d8ec"/></radialGradient>
 <g id="mag"><path d="M5.500 5L7 6.200" stroke="#c89858" stroke-width="4.200" stroke-linecap="round"/><circle cx="0" cy="0" r="6.300" fill="url(#glens)" stroke="#7088a8" stroke-width="1.300"/></g>
</defs>
<text x="284.500" y="62.700" font-size="15" font-weight="bold" textLength="16" lengthAdjust="spacingAndGlyphs" stroke="#000" stroke-width=".4">3D</text>
<g filter="url(#b1)">
 <use href="#mag" x="314.700" y="57"/><path d="M310.500 57H319M314.700 52.800V61.200" stroke="#3a5a98" stroke-width="1.500"/>
 <use href="#mag" x="338" y="57"/><path d="M333.800 57H342.200" stroke="#3a5a98" stroke-width="1.500"/>
 <use href="#mag" x="361.500" y="57"/><path d="M358.500 56C359 52.500 364.500 52.500 365 56.500C365.300 60 361 61 359.500 59" fill="none" stroke="#889810" stroke-width="1.600"/><path d="M356.800 55L358.800 58.500L361 55Z" fill="#889810"/>
 <use href="#mag" x="392" y="57"/>
 <use href="#mag" x="415" y="57"/><rect x="411.500" y="54" width="7" height="6" fill="none" stroke="#3a5a98" stroke-width="1.400"/>
 <path d="M431 56C431 50 440 49.500 442 53C446 54 445 58 443 59L447 64H441L440 61C436 64 431 62 431 56Z" fill="#a4a4a4"/>
</g>
<text x="388" y="59.500" font-size="5.500" font-weight="bold" fill="#3a6aa8">1:1</text>
<path d="M378 50V68M454.500 50V68M531.500 50V68" stroke="#b4b4b4" stroke-width="1"/>
<path d="M379 50V68M455.500 50V68M532.500 50V68" stroke="#fff" stroke-width="1"/>
<rect x="459.500" y="48.500" width="22" height="20.500" fill="#f8f8f8"/><path d="M459.500 69V48.500H481.500" fill="none" stroke="#b0b0b0" stroke-width="1"/>
<rect x="482.500" y="48.500" width="21.500" height="20.500" fill="#f8f8f8"/><path d="M482.500 69V48.500H504" fill="none" stroke="#b0b0b0" stroke-width="1"/>
<g>
 <path d="M466.500 52V66" stroke="#000" stroke-width="1" stroke-dasharray="1 1"/><path d="M468 53.500H471M468 56H470M468 62H470M468 64.500H471" stroke="#000" stroke-width="1"/>
 <path d="M469.500 59L474 54.500V57H479V61H474V63.500Z" fill="#000"/>
 <path d="M498.500 52V66" stroke="#000" stroke-width="1" stroke-dasharray="1 1"/><path d="M494 53.500H497M495 56H497M495 62H497M494 64.500H497" stroke="#000" stroke-width="1"/>
 <path d="M497 59L492.500 54.500V57H487V61H492.500V63.500Z" fill="#333"/>
</g>
<g filter="url(#b1)">
 <path d="M520 61L524 65" stroke="#c89858" stroke-width="2.500"/>
 <circle cx="518" cy="58" r="4.800" fill="url(#glens)" stroke="#8090b0" stroke-width="1"/>
 <path d="M507.500 58.500L517 53V64Z" fill="#5858c0" opacity=".85"/>
</g>
<path d="M544 59H617" stroke="#8a8a8a" stroke-width="1.600"/><path d="M544 60.500H617" stroke="#fdfdfd" stroke-width="1"/>
<path d="M618.500 52.500V66.500L626.500 69.500L628 68V50" fill="#ececec" stroke="none"/>
<path d="M627.500 50V67.500L624 70" fill="none" stroke="#6a6a6a" stroke-width="1.300"/><path d="M618.500 52V67" stroke="#e0e0e0" stroke-width="1"/>
</svg>
<svg id="door" style="left:587px;top:144px;overflow:hidden" width="191" height="491" viewBox="587 144 191 491">
<defs>
<linearGradient id="hs" x1="0" y1="0" x2="0" y2="1"><stop offset="0" stop-color="#545454"/><stop offset=".06" stop-color="#7c7c7c"/><stop offset=".13" stop-color="#969696"/><stop offset=".31" stop-color="#a4a4a4"/><stop offset=".36" stop-color="#cecece"/><stop offset=".43" stop-color="#f4f4f4"/><stop offset=".57" stop-color="#f4f4f4"/><stop offset=".64" stop-color="#cecece"/><stop offset=".69" stop-color="#a0a0a0"/><stop offset=".87" stop-color="#929292"/><stop offset=".94" stop-color="#787878"/><stop offset="1" stop-color="#525252"/></linearGradient>
<linearGradient id="vs" x1="0" y1="0" x2="1" y2="0"><stop offset="0" stop-color="#525252"/><stop offset=".08" stop-color="#6c6c6c"/><stop offset=".16" stop-color="#7c7c7c"/><stop offset=".22" stop-color="#a6a6a6"/><stop offset=".36" stop-color="#b2b2b2"/><stop offset=".42" stop-color="#e4e4e4"/><stop offset=".52" stop-color="#fafafa"/><stop offset=".62" stop-color="#e4e4e4"/><stop offset=".68" stop-color="#aeaeae"/><stop offset=".8" stop-color="#a0a0a0"/><stop offset=".86" stop-color="#7a7a7a"/><stop offset=".93" stop-color="#6a6a6a"/><stop offset="1" stop-color="#505050"/></linearGradient>
<linearGradient id="he" x1="0" y1="0" x2="1" y2="0"><stop offset="0" stop-color="#000" stop-opacity=".36"/><stop offset=".1" stop-color="#000" stop-opacity=".18"/><stop offset=".28" stop-color="#000" stop-opacity="0"/><stop offset=".72" stop-color="#000" stop-opacity="0"/><stop offset=".9" stop-color="#000" stop-opacity=".18"/><stop offset="1" stop-color="#000" stop-opacity=".36"/></linearGradient>
<linearGradient id="ve" x1="0" y1="0" x2="0" y2="1"><stop offset="0" stop-color="#000" stop-opacity=".36"/><stop offset=".12" stop-color="#000" stop-opacity=".16"/><stop offset=".28" stop-color="#000" stop-opacity="0"/><stop offset=".72" stop-color="#000" stop-opacity="0"/><stop offset=".88" stop-color="#000" stop-opacity=".16"/><stop offset="1" stop-color="#000" stop-opacity=".36"/></linearGradient>
<pattern id="weave" x="603.4" y="158.8" width="51.2" height="36" patternUnits="userSpaceOnUse">
 <rect width="51.2" height="36" fill="#4a4a4a"/>
 <rect x="0" y="0.4" width="32.6" height="17" fill="url(#hs)"/><rect x="0" y="0.4" width="32.6" height="17" fill="url(#he)"/>
 <rect x="33" y="0" width="18" height="18" fill="url(#vs)"/><rect x="33" y="0" width="18" height="18" fill="url(#ve)"/>
 <rect x="25.6" y="18.4" width="32.6" height="17" fill="url(#hs)"/><rect x="25.6" y="18.4" width="32.6" height="17" fill="url(#he)"/>
 <rect x="-25.6" y="18.4" width="32.6" height="17" fill="url(#hs)"/><rect x="-25.6" y="18.4" width="32.6" height="17" fill="url(#he)"/>
 <rect x="7.4" y="18" width="18" height="18" fill="url(#vs)"/><rect x="7.4" y="18" width="18" height="18" fill="url(#ve)"/>
</pattern>
<linearGradient id="frL" x1="0" y1="0" x2="1" y2="0"><stop offset="0" stop-color="#000"/><stop offset=".09" stop-color="#1c1c1c"/><stop offset=".2" stop-color="#6c6c6c"/><stop offset=".32" stop-color="#c8c8c8"/><stop offset=".42" stop-color="#f6f6f6"/><stop offset=".5" stop-color="#ffffff"/><stop offset=".78" stop-color="#ffffff"/><stop offset=".9" stop-color="#d4d4d4"/><stop offset="1" stop-color="#909090"/></linearGradient>
<linearGradient id="frR" x1="1" y1="0" x2="0" y2="0"><stop offset="0" stop-color="#000"/><stop offset=".09" stop-color="#1c1c1c"/><stop offset=".2" stop-color="#6c6c6c"/><stop offset=".32" stop-color="#c8c8c8"/><stop offset=".42" stop-color="#f6f6f6"/><stop offset=".5" stop-color="#ffffff"/><stop offset=".78" stop-color="#ffffff"/><stop offset=".9" stop-color="#d4d4d4"/><stop offset="1" stop-color="#909090"/></linearGradient>
<linearGradient id="frT" x1="0" y1="0" x2="0" y2="1"><stop offset="0" stop-color="#000"/><stop offset=".09" stop-color="#1c1c1c"/><stop offset=".2" stop-color="#6c6c6c"/><stop offset=".32" stop-color="#c8c8c8"/><stop offset=".42" stop-color="#f6f6f6"/><stop offset=".5" stop-color="#ffffff"/><stop offset=".78" stop-color="#ffffff"/><stop offset=".9" stop-color="#d4d4d4"/><stop offset="1" stop-color="#909090"/></linearGradient>
<linearGradient id="frB" x1="0" y1="1" x2="0" y2="0"><stop offset="0" stop-color="#000"/><stop offset=".09" stop-color="#1c1c1c"/><stop offset=".2" stop-color="#6c6c6c"/><stop offset=".32" stop-color="#c8c8c8"/><stop offset=".42" stop-color="#f6f6f6"/><stop offset=".5" stop-color="#ffffff"/><stop offset=".78" stop-color="#ffffff"/><stop offset=".9" stop-color="#d4d4d4"/><stop offset="1" stop-color="#909090"/></linearGradient>
<linearGradient id="bar" x1="0" y1="0" x2="0" y2="1"><stop offset="0" stop-color="#7a7a7a"/><stop offset=".18" stop-color="#dcdcdc"/><stop offset=".32" stop-color="#ffffff"/><stop offset=".68" stop-color="#ffffff"/><stop offset=".82" stop-color="#dcdcdc"/><stop offset="1" stop-color="#606060"/></linearGradient>
<linearGradient id="col" x1="0" y1="0" x2="1" y2="0"><stop offset="0" stop-color="#4a4a4a"/><stop offset=".12" stop-color="#8a8a8a"/><stop offset=".5" stop-color="#a4a4a4"/><stop offset=".88" stop-color="#8a8a8a"/><stop offset="1" stop-color="#4a4a4a"/></linearGradient>
<radialGradient id="bead"><stop offset="0" stop-color="#fff"/><stop offset=".5" stop-color="#f4f4f4"/><stop offset=".8" stop-color="#b8b8b8"/><stop offset="1" stop-color="#4a4a4a"/></radialGradient>
<filter id="soft" x="-5%" y="-5%" width="110%" height="110%"><feGaussianBlur stdDeviation="0.45"/></filter>
<filter id="ornf" x="-5%" y="-5%" width="110%" height="110%"><feMorphology operator="dilate" radius="0.45"/><feGaussianBlur stdDeviation="0.45"/></filter>
<filter id="soft2" x="-5%" y="-5%" width="110%" height="110%"><feGaussianBlur stdDeviation="0.38"/></filter>
</defs>
<rect x="587" y="144" width="191" height="491" fill="#000"/>
<g filter="url(#soft2)">
<rect x="598" y="155" width="169.500" height="115.500" fill="url(#weave)"/>
<rect x="598" y="509" width="169.500" height="115.500" fill="url(#weave)" transform="translate(0 1133.500) scale(1 -1)"/>
</g>
<rect x="598" y="278" width="169.500" height="223" fill="#000"/>
<g filter="url(#soft)">
<path d="M587 144L598.5 155.5H766.5L778 144Z" fill="url(#frT)"/>
<path d="M587 635L598.5 623.5H766.5L778 635Z" fill="url(#frB)"/>
<path d="M587 143.3L598.5 154.8V624.2L587 635.7Z" fill="url(#frL)"/>
<path d="M778 143.3L766.5 154.8V624.2L778 635.7Z" fill="url(#frR)"/>
<rect x="596" y="270.500" width="173.500" height="8" fill="url(#bar)"/>
<rect x="596" y="500.500" width="173.500" height="8.500" fill="url(#bar)"/>
</g>
<g filter="url(#soft)">
<rect x="606.6" y="282" width="18.500" height="215" fill="url(#col)"/><rect x="607.6" y="299.5" width="16.500" height="3" fill="#d8d8d8" opacity=".85"/><rect x="607.6" y="331" width="16.500" height="3" fill="#d0d0d0" opacity=".85"/><rect x="607.6" y="372.5" width="16.500" height="3" fill="#d0d0d0" opacity=".85"/><rect x="607.6" y="404" width="16.500" height="3" fill="#d0d0d0" opacity=".85"/><rect x="607.6" y="444.5" width="16.500" height="3" fill="#d0d0d0" opacity=".85"/><rect x="607.6" y="477.5" width="16.500" height="3" fill="#d8d8d8" opacity=".85"/><circle cx="615.8000000000001" cy="321" r="7.8" fill="#d4d4d4" opacity=".6"/><circle cx="615.8000000000001" cy="321" r="7" fill="none" stroke="#f0f0f0" stroke-width="1.2" stroke-dasharray="1.2 1.2" opacity=".9"/><circle cx="615.8000000000001" cy="321" r="4.5" fill="none" stroke="#f4f4f4" stroke-width="1.2" stroke-dasharray="1 1" opacity=".9"/><circle cx="615.8000000000001" cy="321" r="2" fill="#eee" opacity=".9"/><circle cx="615.8000000000001" cy="457" r="7.8" fill="#d4d4d4" opacity=".6"/><circle cx="615.8000000000001" cy="457" r="7" fill="none" stroke="#f0f0f0" stroke-width="1.2" stroke-dasharray="1.2 1.2" opacity=".9"/><circle cx="615.8000000000001" cy="457" r="4.5" fill="none" stroke="#f4f4f4" stroke-width="1.2" stroke-dasharray="1 1" opacity=".9"/><circle cx="615.8000000000001" cy="457" r="2" fill="#eee" opacity=".9"/><rect x="606.6" y="282" width="18.500" height="5" fill="#000" opacity=".35"/><rect x="606.6" y="492" width="18.500" height="5" fill="#000" opacity=".35"/>
<rect x="740.4" y="282" width="18.500" height="215" fill="url(#col)"/><rect x="741.4" y="299.5" width="16.500" height="3" fill="#d8d8d8" opacity=".85"/><rect x="741.4" y="331" width="16.500" height="3" fill="#d0d0d0" opacity=".85"/><rect x="741.4" y="372.5" width="16.500" height="3" fill="#d0d0d0" opacity=".85"/><rect x="741.4" y="404" width="16.500" height="3" fill="#d0d0d0" opacity=".85"/><rect x="741.4" y="444.5" width="16.500" height="3" fill="#d0d0d0" opacity=".85"/><rect x="741.4" y="477.5" width="16.500" height="3" fill="#d8d8d8" opacity=".85"/><circle cx="749.6" cy="321" r="7.8" fill="#d4d4d4" opacity=".6"/><circle cx="749.6" cy="321" r="7" fill="none" stroke="#f0f0f0" stroke-width="1.2" stroke-dasharray="1.2 1.2" opacity=".9"/><circle cx="749.6" cy="321" r="4.5" fill="none" stroke="#f4f4f4" stroke-width="1.2" stroke-dasharray="1 1" opacity=".9"/><circle cx="749.6" cy="321" r="2" fill="#eee" opacity=".9"/><circle cx="749.6" cy="457" r="7.8" fill="#d4d4d4" opacity=".6"/><circle cx="749.6" cy="457" r="7" fill="none" stroke="#f0f0f0" stroke-width="1.2" stroke-dasharray="1.2 1.2" opacity=".9"/><circle cx="749.6" cy="457" r="4.5" fill="none" stroke="#f4f4f4" stroke-width="1.2" stroke-dasharray="1 1" opacity=".9"/><circle cx="749.6" cy="457" r="2" fill="#eee" opacity=".9"/><rect x="740.4" y="282" width="18.500" height="5" fill="#000" opacity=".35"/><rect x="740.4" y="492" width="18.500" height="5" fill="#000" opacity=".35"/>
</g>
<g id="panelTL">
<path d="M629.8 282.5H675.7V341.27A53.5 53.5 0 0 1 629.8 383.12Z" fill="#000"/>
<g filter="url(#soft)"><path d="M629.8 282.5H675.7V341.27A53.5 53.5 0 0 1 629.8 383.12Z" fill="none" stroke="#242424" stroke-width="9.4" stroke-linejoin="miter" /><path d="M629.8 282.5H675.7V341.27A53.5 53.5 0 0 1 629.8 383.12Z" fill="none" stroke="#4c4c4c" stroke-width="8.2" stroke-linejoin="miter" /><path d="M629.8 282.5H675.7V341.27A53.5 53.5 0 0 1 629.8 383.12Z" fill="none" stroke="#7e7e7e" stroke-width="7.0" stroke-linejoin="miter" /><path d="M629.8 282.5H675.7V341.27A53.5 53.5 0 0 1 629.8 383.12Z" fill="none" stroke="#b0b0b0" stroke-width="5.8" stroke-linejoin="miter" /><path d="M629.8 282.5H675.7V341.27A53.5 53.5 0 0 1 629.8 383.12Z" fill="none" stroke="#dadada" stroke-width="4.6" stroke-linejoin="miter" /><path d="M629.8 282.5H675.7V341.27A53.5 53.5 0 0 1 629.8 383.12Z" fill="none" stroke="#f4f4f4" stroke-width="3.4" stroke-linejoin="miter" /><path d="M629.8 282.5H675.7V341.27A53.5 53.5 0 0 1 629.8 383.12Z" fill="none" stroke="#ffffff" stroke-width="2.4" stroke-linejoin="miter" /></g>
<g filter="url(#soft)" fill="none" stroke-linecap="round" stroke-linejoin="round">
 <!-- wings -->
 <path d="M651.500 306.500C647 306.500 640 304 636.200 297.500C639.500 300 643 299.500 645.500 301C644.500 299 645 298 645.500 297C647.500 300.500 650.500 302 651.500 306.500Z" fill="#e4e4e4" stroke="#fff" stroke-width="1.20"/>
 <path d="M654.500 306.500C659 306.500 666 304 669.800 297.500C666.500 300 663 299.500 660.500 301C661.500 299 661 298 660.500 297C658.500 300.500 655.500 302 654.500 306.500Z" fill="#e4e4e4" stroke="#fff" stroke-width="1.20"/>
 <path d="M653 296.500L654.800 303L653 306L651.200 303Z" fill="#f4f4f4" stroke="#fff" stroke-width="1.10"/>
 <path d="M645.500 307.500H660.500" stroke="#d8d8d8" stroke-width="2.32"/>
 <!-- arches -->
 <path d="M645.800 321C642.500 313 646 306.800 653 306.800C660 306.800 663.500 313 660.200 321" stroke="#f0f0f0" stroke-width="2.46"/>
 <path d="M642.800 319C639.500 311 644 304.500 649 304.500M663.200 319C666.500 311 662 304.500 657 304.500" stroke="#c4c4c4" stroke-width="1.89"/>
 <path d="M644.500 321.500C642 324 638.500 322.500 637.200 319.500M661.500 321.500C664 324 667.500 322.500 668.800 319.500" stroke="#e8e8e8" stroke-width="2.17"/>
 <!-- ring -->
 <circle cx="653" cy="313" r="3.300" stroke="#fff" stroke-width="3.04"/>
 <!-- stem -->
 <path d="M651.900 317.500H654.100L654.300 350L653 357L651.700 350Z" fill="#ececec" stroke="#fff" stroke-width="1.10"/>
 <path d="M649.500 324.500H656.500" stroke="#e0e0e0" stroke-width="2.17"/>
 <!-- mid leaves -->
 <path d="M651 325.500C646 323.500 641 325 637.500 322.500M651 327.500C646 327 641 330 637.300 328M655 325.500C660 323.500 665 325 668.500 322.500M655 327.500C660 327 666 329 669.500 326" stroke="#e6e6e6" stroke-width="2.17"/>
 <!-- left feathers -->
 <path d="M650.500 331C645 330.500 640 333 637.500 337M650.800 334.500C646 334 641 337 638 341.500M651 338C647 338 642.500 341 640 346M651.200 341.500C648 342 644.500 345 642.500 349.500M651.400 345C649 346 646.500 349 645.500 353" stroke="#eaeaea" stroke-width="2.17"/>
 <path d="M650.500 329C648.500 331 649.500 335 651 337" stroke="#c0c0c0" stroke-width="1.74"/>
 <!-- right scroll -->
 <path d="M655 330C660 326.500 668.500 329 669 337C669.400 344.500 661 349.500 656.500 345.500" stroke="#ededed" stroke-width="3.04"/>
 <path d="M655.500 334C659.500 331.500 664.500 333.500 664.500 338C664.500 342 660.500 343.500 658.800 341" stroke="#d0d0d0" stroke-width="2.03"/>
 <circle cx="659" cy="340" r="1.700" fill="#fff" stroke="none"/>
 <path d="M655.200 346C657 349 659 350 661.500 349.500M655 349.500C656 351.500 657.500 352.500 659 352.500" stroke="#d8d8d8" stroke-width="1.74"/>
 <!-- rosette -->
 <path d="M650 350L643.500 355.500" stroke="#bdbdbd" stroke-width="1.89"/>
 <circle cx="641.200" cy="357.300" r="2.500" fill="#8a8a8a" stroke="#e8e8e8" stroke-width="2.17"/>
 <path d="M637.600 362L638.300 363.600L640 364L638.300 364.600L637.600 366.200L636.900 364.600L635.200 364L636.900 363.600Z" fill="#eee" stroke="none"/>
</g>

</g>
<use href="#panelTL" transform="translate(1365.5 0) scale(-1 1)"/>
<use href="#panelTL" transform="translate(0 779.0) scale(1 -1)"/>
<use href="#panelTL" transform="translate(1365.5 779.0) scale(-1 -1)"/>
<path d="M682.75 358.41A65.8 65.8 0 0 1 651.50 389.5A65.8 65.8 0 0 1 682.75 420.59A65.8 65.8 0 0 1 714.00 389.5A65.8 65.8 0 0 1 682.75 358.41Z" fill="#000"/>
<g filter="url(#soft)"><path d="M682.75 358.41A65.8 65.8 0 0 1 651.50 389.5A65.8 65.8 0 0 1 682.75 420.59A65.8 65.8 0 0 1 714.00 389.5A65.8 65.8 0 0 1 682.75 358.41Z" fill="none" stroke="#242424" stroke-width="9.4" stroke-linejoin="miter" /><path d="M682.75 358.41A65.8 65.8 0 0 1 651.50 389.5A65.8 65.8 0 0 1 682.75 420.59A65.8 65.8 0 0 1 714.00 389.5A65.8 65.8 0 0 1 682.75 358.41Z" fill="none" stroke="#4c4c4c" stroke-width="8.2" stroke-linejoin="miter" /><path d="M682.75 358.41A65.8 65.8 0 0 1 651.50 389.5A65.8 65.8 0 0 1 682.75 420.59A65.8 65.8 0 0 1 714.00 389.5A65.8 65.8 0 0 1 682.75 358.41Z" fill="none" stroke="#7e7e7e" stroke-width="7.0" stroke-linejoin="miter" /><path d="M682.75 358.41A65.8 65.8 0 0 1 651.50 389.5A65.8 65.8 0 0 1 682.75 420.59A65.8 65.8 0 0 1 714.00 389.5A65.8 65.8 0 0 1 682.75 358.41Z" fill="none" stroke="#b0b0b0" stroke-width="5.8" stroke-linejoin="miter" /><path d="M682.75 358.41A65.8 65.8 0 0 1 651.50 389.5A65.8 65.8 0 0 1 682.75 420.59A65.8 65.8 0 0 1 714.00 389.5A65.8 65.8 0 0 1 682.75 358.41Z" fill="none" stroke="#dadada" stroke-width="4.6" stroke-linejoin="miter" /><path d="M682.75 358.41A65.8 65.8 0 0 1 651.50 389.5A65.8 65.8 0 0 1 682.75 420.59A65.8 65.8 0 0 1 714.00 389.5A65.8 65.8 0 0 1 682.75 358.41Z" fill="none" stroke="#f4f4f4" stroke-width="3.4" stroke-linejoin="miter" /><path d="M682.75 358.41A65.8 65.8 0 0 1 651.50 389.5A65.8 65.8 0 0 1 682.75 420.59A65.8 65.8 0 0 1 714.00 389.5A65.8 65.8 0 0 1 682.75 358.41Z" fill="none" stroke="#ffffff" stroke-width="2.4" stroke-linejoin="miter" /></g>
<g filter="url(#soft)">
<path d="M686.95 389.50Q693.61 391.50 699.05 389.50Q693.61 387.50 686.95 389.50Z" fill="#e8e8e8" stroke="#fff" stroke-width=".5"/>
<path d="M687.95 389.50L696.55 389.50" stroke="#444" stroke-width=".7"/>
<path d="M686.63 391.11Q690.80 394.67 695.39 394.74Q692.10 391.53 686.63 391.11Z" fill="#bcbcbc" stroke="#fff" stroke-width=".5"/>
<path d="M687.55 391.49L693.08 393.78" stroke="#444" stroke-width=".7"/>
<path d="M685.72 392.47Q687.28 396.85 691.12 397.87Q690.10 394.03 685.72 392.47Z" fill="#e8e8e8" stroke="#fff" stroke-width=".5"/>
<path d="M686.43 393.18L689.35 396.10" stroke="#444" stroke-width=".7"/>
<path d="M684.36 393.38Q684.85 399.01 688.10 402.43Q687.99 397.70 684.36 393.38Z" fill="#bcbcbc" stroke="#fff" stroke-width=".5"/>
<path d="M684.74 394.30L687.15 400.12" stroke="#444" stroke-width=".7"/>
<path d="M682.75 393.70Q680.75 400.85 682.75 406.70Q684.75 400.85 682.75 393.70Z" fill="#e8e8e8" stroke="#fff" stroke-width=".5"/>
<path d="M682.75 394.70L682.75 404.20" stroke="#444" stroke-width=".7"/>
<path d="M681.14 393.38Q677.51 397.70 677.40 402.43Q680.65 399.01 681.14 393.38Z" fill="#bcbcbc" stroke="#fff" stroke-width=".5"/>
<path d="M680.76 394.30L678.35 400.12" stroke="#444" stroke-width=".7"/>
<path d="M679.78 392.47Q675.40 394.03 674.38 397.87Q678.22 396.85 679.78 392.47Z" fill="#e8e8e8" stroke="#fff" stroke-width=".5"/>
<path d="M679.07 393.18L676.15 396.10" stroke="#444" stroke-width=".7"/>
<path d="M678.87 391.11Q673.40 391.53 670.11 394.74Q674.70 394.67 678.87 391.11Z" fill="#bcbcbc" stroke="#fff" stroke-width=".5"/>
<path d="M677.95 391.49L672.42 393.78" stroke="#444" stroke-width=".7"/>
<path d="M678.55 389.50Q671.89 387.50 666.45 389.50Q671.89 391.50 678.55 389.50Z" fill="#e8e8e8" stroke="#fff" stroke-width=".5"/>
<path d="M677.55 389.50L668.95 389.50" stroke="#444" stroke-width=".7"/>
<path d="M678.87 387.89Q674.70 384.33 670.11 384.26Q673.40 387.47 678.87 387.89Z" fill="#bcbcbc" stroke="#fff" stroke-width=".5"/>
<path d="M677.95 387.51L672.42 385.22" stroke="#444" stroke-width=".7"/>
<path d="M679.78 386.53Q678.22 382.15 674.38 381.13Q675.40 384.97 679.78 386.53Z" fill="#e8e8e8" stroke="#fff" stroke-width=".5"/>
<path d="M679.07 385.82L676.15 382.90" stroke="#444" stroke-width=".7"/>
<path d="M681.14 385.62Q680.65 379.99 677.40 376.57Q677.51 381.30 681.14 385.62Z" fill="#bcbcbc" stroke="#fff" stroke-width=".5"/>
<path d="M680.76 384.70L678.35 378.88" stroke="#444" stroke-width=".7"/>
<path d="M682.75 385.30Q684.75 378.15 682.75 372.30Q680.75 378.15 682.75 385.30Z" fill="#e8e8e8" stroke="#fff" stroke-width=".5"/>
<path d="M682.75 384.30L682.75 374.80" stroke="#444" stroke-width=".7"/>
<path d="M684.36 385.62Q687.99 381.30 688.10 376.57Q684.85 379.99 684.36 385.62Z" fill="#bcbcbc" stroke="#fff" stroke-width=".5"/>
<path d="M684.74 384.70L687.15 378.88" stroke="#444" stroke-width=".7"/>
<path d="M685.72 386.53Q690.10 384.97 691.12 381.13Q687.28 382.15 685.72 386.53Z" fill="#e8e8e8" stroke="#fff" stroke-width=".5"/>
<path d="M686.43 385.82L689.35 382.90" stroke="#444" stroke-width=".7"/>
<path d="M686.63 387.89Q692.10 387.47 695.39 384.26Q690.80 384.33 686.63 387.89Z" fill="#bcbcbc" stroke="#fff" stroke-width=".5"/>
<path d="M687.55 387.51L693.08 385.22" stroke="#444" stroke-width=".7"/>
<circle cx="682.75" cy="389.5" r="5" fill="#222"/>
<circle cx="682.75" cy="389.5" r="3.500" fill="#909090" stroke="#f4f4f4" stroke-width="1.400"/>
</g>
<g filter="url(#soft)"><circle cx="602.75" cy="285.20" r="2.8" fill="url(#bead)"/><circle cx="762.75" cy="285.20" r="2.8" fill="url(#bead)"/><circle cx="602.75" cy="291.33" r="2.8" fill="url(#bead)"/><circle cx="762.75" cy="291.33" r="2.8" fill="url(#bead)"/><circle cx="602.75" cy="297.46" r="2.8" fill="url(#bead)"/><circle cx="762.75" cy="297.46" r="2.8" fill="url(#bead)"/><circle cx="602.75" cy="303.59" r="2.8" fill="url(#bead)"/><circle cx="762.75" cy="303.59" r="2.8" fill="url(#bead)"/><circle cx="602.75" cy="309.72" r="2.8" fill="url(#bead)"/><circle cx="762.75" cy="309.72" r="2.8" fill="url(#bead)"/><circle cx="602.75" cy="315.85" r="2.8" fill="url(#bead)"/><circle cx="762.75" cy="315.85" r="2.8" fill="url(#bead)"/><circle cx="602.75" cy="321.98" r="2.8" fill="url(#bead)"/><circle cx="762.75" cy="321.98" r="2.8" fill="url(#bead)"/><circle cx="602.75" cy="328.11" r="2.8" fill="url(#bead)"/><circle cx="762.75" cy="328.11" r="2.8" fill="url(#bead)"/><circle cx="602.75" cy="334.24" r="2.8" fill="url(#bead)"/><circle cx="762.75" cy="334.24" r="2.8" fill="url(#bead)"/><circle cx="602.75" cy="340.37" r="2.8" fill="url(#bead)"/><circle cx="762.75" cy="340.37" r="2.8" fill="url(#bead)"/><circle cx="602.75" cy="346.50" r="2.8" fill="url(#bead)"/><circle cx="762.75" cy="346.50" r="2.8" fill="url(#bead)"/><circle cx="602.75" cy="352.63" r="2.8" fill="url(#bead)"/><circle cx="762.75" cy="352.63" r="2.8" fill="url(#bead)"/><circle cx="602.75" cy="358.76" r="2.8" fill="url(#bead)"/><circle cx="762.75" cy="358.76" r="2.8" fill="url(#bead)"/><circle cx="602.75" cy="364.89" r="2.8" fill="url(#bead)"/><circle cx="762.75" cy="364.89" r="2.8" fill="url(#bead)"/><circle cx="602.75" cy="371.02" r="2.8" fill="url(#bead)"/><circle cx="762.75" cy="371.02" r="2.8" fill="url(#bead)"/><circle cx="602.75" cy="377.15" r="2.8" fill="url(#bead)"/><circle cx="762.75" cy="377.15" r="2.8" fill="url(#bead)"/><circle cx="602.75" cy="383.28" r="2.8" fill="url(#bead)"/><circle cx="762.75" cy="383.28" r="2.8" fill="url(#bead)"/><circle cx="602.75" cy="389.41" r="2.8" fill="url(#bead)"/><circle cx="762.75" cy="389.41" r="2.8" fill="url(#bead)"/><circle cx="602.75" cy="395.54" r="2.8" fill="url(#bead)"/><circle cx="762.75" cy="395.54" r="2.8" fill="url(#bead)"/><circle cx="602.75" cy="401.67" r="2.8" fill="url(#bead)"/><circle cx="762.75" cy="401.67" r="2.8" fill="url(#bead)"/><circle cx="602.75" cy="407.80" r="2.8" fill="url(#bead)"/><circle cx="762.75" cy="407.80" r="2.8" fill="url(#bead)"/><circle cx="602.75" cy="413.93" r="2.8" fill="url(#bead)"/><circle cx="762.75" cy="413.93" r="2.8" fill="url(#bead)"/><circle cx="602.75" cy="420.06" r="2.8" fill="url(#bead)"/><circle cx="762.75" cy="420.06" r="2.8" fill="url(#bead)"/><circle cx="602.75" cy="426.19" r="2.8" fill="url(#bead)"/><circle cx="762.75" cy="426.19" r="2.8" fill="url(#bead)"/><circle cx="602.75" cy="432.32" r="2.8" fill="url(#bead)"/><circle cx="762.75" cy="432.32" r="2.8" fill="url(#bead)"/><circle cx="602.75" cy="438.45" r="2.8" fill="url(#bead)"/><circle cx="762.75" cy="438.45" r="2.8" fill="url(#bead)"/><circle cx="602.75" cy="444.58" r="2.8" fill="url(#bead)"/><circle cx="762.75" cy="444.58" r="2.8" fill="url(#bead)"/><circle cx="602.75" cy="450.71" r="2.8" fill="url(#bead)"/><circle cx="762.75" cy="450.71" r="2.8" fill="url(#bead)"/><circle cx="602.75" cy="456.84" r="2.8" fill="url(#bead)"/><circle cx="762.75" cy="456.84" r="2.8" fill="url(#bead)"/><circle cx="602.75" cy="462.97" r="2.8" fill="url(#bead)"/><circle cx="762.75" cy="462.97" r="2.8" fill="url(#bead)"/><circle cx="602.75" cy="469.10" r="2.8" fill="url(#bead)"/><circle cx="762.75" cy="469.10" r="2.8" fill="url(#bead)"/><circle cx="602.75" cy="475.23" r="2.8" fill="url(#bead)"/><circle cx="762.75" cy="475.23" r="2.8" fill="url(#bead)"/><circle cx="602.75" cy="481.36" r="2.8" fill="url(#bead)"/><circle cx="762.75" cy="481.36" r="2.8" fill="url(#bead)"/><circle cx="602.75" cy="487.49" r="2.8" fill="url(#bead)"/><circle cx="762.75" cy="487.49" r="2.8" fill="url(#bead)"/><circle cx="602.75" cy="493.62" r="2.8" fill="url(#bead)"/><circle cx="762.75" cy="493.62" r="2.8" fill="url(#bead)"/><circle cx="680.35" cy="346.17" r="2.8" fill="url(#bead)"/><circle cx="680.35" cy="432.83" r="2.8" fill="url(#bead)"/><circle cx="685.15" cy="346.17" r="2.8" fill="url(#bead)"/><circle cx="685.15" cy="432.83" r="2.8" fill="url(#bead)"/><circle cx="678.37" cy="351.97" r="2.8" fill="url(#bead)"/><circle cx="678.37" cy="427.03" r="2.8" fill="url(#bead)"/><circle cx="687.13" cy="351.97" r="2.8" fill="url(#bead)"/><circle cx="687.13" cy="427.03" r="2.8" fill="url(#bead)"/><circle cx="675.81" cy="357.53" r="2.8" fill="url(#bead)"/><circle cx="675.81" cy="421.47" r="2.8" fill="url(#bead)"/><circle cx="689.69" cy="357.53" r="2.8" fill="url(#bead)"/><circle cx="689.69" cy="421.47" r="2.8" fill="url(#bead)"/><circle cx="672.68" cy="362.80" r="2.8" fill="url(#bead)"/><circle cx="672.68" cy="416.20" r="2.8" fill="url(#bead)"/><circle cx="692.82" cy="362.80" r="2.8" fill="url(#bead)"/><circle cx="692.82" cy="416.20" r="2.8" fill="url(#bead)"/><circle cx="669.03" cy="367.72" r="2.8" fill="url(#bead)"/><circle cx="669.03" cy="411.28" r="2.8" fill="url(#bead)"/><circle cx="696.47" cy="367.72" r="2.8" fill="url(#bead)"/><circle cx="696.47" cy="411.28" r="2.8" fill="url(#bead)"/><circle cx="664.89" cy="372.23" r="2.8" fill="url(#bead)"/><circle cx="664.89" cy="406.77" r="2.8" fill="url(#bead)"/><circle cx="700.61" cy="372.23" r="2.8" fill="url(#bead)"/><circle cx="700.61" cy="406.77" r="2.8" fill="url(#bead)"/><circle cx="660.30" cy="376.29" r="2.8" fill="url(#bead)"/><circle cx="660.30" cy="402.71" r="2.8" fill="url(#bead)"/><circle cx="705.20" cy="376.29" r="2.8" fill="url(#bead)"/><circle cx="705.20" cy="402.71" r="2.8" fill="url(#bead)"/><circle cx="655.32" cy="379.86" r="2.8" fill="url(#bead)"/><circle cx="655.32" cy="399.14" r="2.8" fill="url(#bead)"/><circle cx="710.18" cy="379.86" r="2.8" fill="url(#bead)"/><circle cx="710.18" cy="399.14" r="2.8" fill="url(#bead)"/><circle cx="649.99" cy="382.89" r="2.8" fill="url(#bead)"/><circle cx="649.99" cy="396.11" r="2.8" fill="url(#bead)"/><circle cx="715.51" cy="382.89" r="2.8" fill="url(#bead)"/><circle cx="715.51" cy="396.11" r="2.8" fill="url(#bead)"/><circle cx="644.38" cy="385.36" r="2.8" fill="url(#bead)"/><circle cx="644.38" cy="393.64" r="2.8" fill="url(#bead)"/><circle cx="721.12" cy="385.36" r="2.8" fill="url(#bead)"/><circle cx="721.12" cy="393.64" r="2.8" fill="url(#bead)"/><circle cx="638.55" cy="387.23" r="2.8" fill="url(#bead)"/><circle cx="638.55" cy="391.77" r="2.8" fill="url(#bead)"/><circle cx="726.95" cy="387.23" r="2.8" fill="url(#bead)"/><circle cx="726.95" cy="391.77" r="2.8" fill="url(#bead)"/><circle cx="632.55" cy="388.49" r="2.8" fill="url(#bead)"/><circle cx="632.55" cy="390.51" r="2.8" fill="url(#bead)"/><circle cx="732.95" cy="388.49" r="2.8" fill="url(#bead)"/><circle cx="732.95" cy="390.51" r="2.8" fill="url(#bead)"/><circle cx="629.00" cy="389.50" r="2.8" fill="url(#bead)"/><circle cx="736.50" cy="389.50" r="2.8" fill="url(#bead)"/><circle cx="682.75" cy="340.04" r="2.8" fill="url(#bead)"/><circle cx="682.75" cy="438.96" r="2.8" fill="url(#bead)"/><circle cx="682.75" cy="333.91" r="2.8" fill="url(#bead)"/><circle cx="682.75" cy="445.09" r="2.8" fill="url(#bead)"/><circle cx="682.75" cy="327.78" r="2.8" fill="url(#bead)"/><circle cx="682.75" cy="451.22" r="2.8" fill="url(#bead)"/><circle cx="682.75" cy="321.65" r="2.8" fill="url(#bead)"/><circle cx="682.75" cy="457.35" r="2.8" fill="url(#bead)"/><circle cx="682.75" cy="315.52" r="2.8" fill="url(#bead)"/><circle cx="682.75" cy="463.48" r="2.8" fill="url(#bead)"/><circle cx="682.75" cy="309.39" r="2.8" fill="url(#bead)"/><circle cx="682.75" cy="469.61" r="2.8" fill="url(#bead)"/><circle cx="682.75" cy="303.26" r="2.8" fill="url(#bead)"/><circle cx="682.75" cy="475.74" r="2.8" fill="url(#bead)"/><circle cx="682.75" cy="297.13" r="2.8" fill="url(#bead)"/><circle cx="682.75" cy="481.87" r="2.8" fill="url(#bead)"/><circle cx="682.75" cy="291.00" r="2.8" fill="url(#bead)"/><circle cx="682.75" cy="488.00" r="2.8" fill="url(#bead)"/><circle cx="682.75" cy="284.87" r="2.8" fill="url(#bead)"/><circle cx="682.75" cy="494.13" r="2.8" fill="url(#bead)"/></g>
<rect x="587.5" y="144.5" width="190" height="490" fill="none" stroke="#000" stroke-width="1"/>
</svg>
<style>
.rh{position:absolute;left:1102px;width:243px;height:15px;background:#34568b;color:#fff;font-weight:bold;font-size:12.2px;line-height:16px;padding-left:4px;white-space:nowrap}
.rhb{position:absolute;left:225px;top:1px;width:13px;height:13px;background:#c3c9d2;border-right:1px solid #6a7686;border-bottom:1px solid #6a7686}
.rhb.up:after{content:"";position:absolute;left:2px;top:2px;border-left:4px solid transparent;border-right:4px solid transparent;border-bottom:8px solid #444}
.rhb.dn:after{content:"";position:absolute;left:2px;top:3px;border-left:4px solid transparent;border-right:4px solid transparent;border-top:8px solid #444}
.dd{position:absolute;left:1103px;width:239px;height:22px;background:#fff;border-top:2px solid #6e6e6e;border-left:2px solid #6e6e6e;border-right:1px solid #e8e8e8;border-bottom:1px solid #e8e8e8;font-size:12.2px;line-height:14px;padding-left:0px;white-space:nowrap}
.ddb{position:absolute;right:0px;top:1px;width:17px;height:18px;background:#f2f2f2;border-right:1px solid #666;border-bottom:1px solid #666}
.ddb:after{content:"";position:absolute;left:4px;top:7px;border-left:4px solid transparent;border-right:4px solid transparent;border-top:4px solid #000}
.lrow{position:absolute;left:1102px;width:243px;height:26px;background:#d6d6d6;font-size:12px;white-space:nowrap}
.ud{position:absolute;width:12px;height:12px;background:#1f4f9f;border-radius:1.5px}
</style>
<div class="rh" style="top:45px">Vectors<span class="rhb up"></span></div>
<div class="dd" style="top:62px">Default Sheet<span class="ddb"></span></div>
<div class="lrow" style="top:112px"><span class="abs" style="left:26px;top:7px">Default Layer</span></div>
<div class="rh" style="top:172px">Bitmaps<span class="rhb dn"></span></div>
<div class="rh" style="top:203px">Reliefs<span class="rhb up"></span></div>
<div class="dd" style="top:220px">Front Relief<span class="ddb"></span></div>
<div class="lrow" style="top:270px"><span class="abs" style="left:47px;top:7px">Relief Layer 1</span></div>
<!--RIGHTICONS-->
<svg style="left:1300px;top:130px" width="50" height="190">
 <g id="udv">
 <rect x="12" y="11" width="12" height="12" rx="1.5" fill="#1f4f9f"/><path d="M18 21V14M14.5 17L18 13.5L21.5 17" fill="none" stroke="#fff" stroke-width="1.6"/>
 <rect x="30" y="11" width="12" height="12" rx="1.5" fill="#1f4f9f"/><path d="M36 13V20M32.500 17L36 20.500L39.500 17" fill="none" stroke="#fff" stroke-width="1.6"/>
 </g>
 <use href="#udv" y="158"/>
</svg>
<!-- window controls -->
<svg style="left:1226px;top:0" width="140" height="44">
 <path d="M19 10.500H29.500" stroke="#000" stroke-width="1"/>
 <path d="M64.500 7.500H72.500V15.500H64.500Z M66.500 7.500V5.500H74.500V13.500H72.500" fill="none" stroke="#000" stroke-width="1"/>
 <path d="M110 5L120 15M120 5L110 15" stroke="#000" stroke-width="1.1"/>
 <g fill="none" stroke="#ececec" stroke-width="1"><rect x="83.500" y="24.500" width="17" height="17"/><rect x="102.500" y="24.500" width="17" height="17"/><rect x="121.500" y="24.500" width="17" height="17"/></g>
 <path d="M88 35H94V37H88Z" fill="#777"/>
 <path d="M107.500 32.500H113.500V36.500H107.500Z M109.500 32V29.800H115.500V34H114" fill="none" stroke="#777" stroke-width="1.4"/>
 <path d="M127.500 30.500L133.500 36.500M133.500 30.500L127.500 36.500" stroke="#777" stroke-width="2"/>
</svg>
<svg id="ricons" style="left:0;top:0" width="1366" height="320">
<defs>
 <linearGradient id="gstack" x1="0" y1="0" x2="1" y2="0"><stop offset="0" stop-color="#d8e0ec"/><stop offset="1" stop-color="#8ca0c0"/></linearGradient>
 <radialGradient id="gbulb" cx=".45" cy=".35" r=".7"><stop offset="0" stop-color="#fffce0"/><stop offset=".5" stop-color="#ffe060"/><stop offset="1" stop-color="#e8a820"/></radialGradient>
 <g id="bulb"><path d="M0 -6.500C4 -6.500 6 -3.500 6 -1C6 2 3.500 3.500 3 6H-3C-3.500 3.500 -6 2 -6 -1C-6 -3.500 -4 -6.500 0 -6.500Z" fill="url(#gbulb)"/><rect x="-2.500" y="6" width="5" height="3" fill="#3a2a18"/></g>
 <g id="stack"><path d="M0 16V3L3 0L5 4L8 2L10 7L13 14V16Z" fill="url(#gstack)"/><path d="M1 16.500H14" stroke="#a0a8b8" stroke-width="1.500"/></g>
 <g id="fold"><path d="M1 4C2 1.500 6 1 8 3L9 5H15V9H17L14.500 15H3L0 10Z" fill="#f4e428"/><path d="M2 10H17L14.500 15.500H3.500Z" fill="#e0cc00"/></g>
 <g id="flop"><rect x="0" y="0" width="13" height="14" fill="#1c58c8"/><rect x="2.500" y="0" width="8" height="6" fill="#e4eaf4"/><rect x="3" y="9" width="7" height="5" fill="#c8d0dc"/><rect x="4" y="10" width="2.200" height="4" fill="#1848b0"/><path d="M13 13H17" stroke="#90a0c0" stroke-width="1.500"/></g>
 <g id="brown"><path d="M2 1H10L12 4V13H4V10H0V3Z" fill="#c0a070"/><path d="M5 5H13L15 8V17H7V14H5Z" fill="#a88858"/><path d="M2 3V12" stroke="#8a6a40" stroke-width="1" stroke-dasharray="1 1"/></g>
 <g id="bucket"><path d="M0 2H12L10.500 13C8 14.500 4 14.500 1.500 13Z" fill="#4a8ae0"/><ellipse cx="6" cy="2.500" rx="6" ry="2.200" fill="#8ab8f0" stroke="#2a60b8" stroke-width=".8"/></g>
</defs>
<g filter="url(#b1)">
 <!-- vectors row -->
 <use href="#stack" x="1104" y="90"/>
 <use href="#fold" x="1139" y="90"/>
 <use href="#flop" x="1177" y="91.500"/>
 <use href="#brown" x="1213" y="90"/>
 <rect x="1251.500" y="90" width="11.500" height="16" fill="#7090c8"/><use href="#bulb" x="1257.300" y="97.500" transform="translate(1257.300 97.500) scale(.75) translate(-1257.300 -97.500)"/>
 <use href="#bucket" x="1289" y="91.500"/>
 <rect x="1322.500" y="89" width="18" height="18" fill="#fdf4d0" stroke="#e0d8b0" stroke-width=".6"/>
 <use href="#bulb" x="1329" y="97" transform="translate(1329 97) scale(.9) translate(-1329 -97)"/><use href="#bulb" x="1335.500" y="95.500" transform="translate(1335.500 95.500) scale(.9) translate(-1335.500 -95.500)"/>
 <!-- layer row -->
 <rect x="1105.500" y="116" width="17.500" height="17.500" fill="#e4e4e4" stroke="#f8f8f8" stroke-width="1"/><path d="M1105.500 133.500H1123V116" fill="none" stroke="#9a9a9a" stroke-width="1"/>
 <circle cx="1114.300" cy="125" r="6.600" fill="#000"/>
 <rect x="1286.500" y="116" width="17.500" height="17.500" fill="#c4c4c4" stroke="#eee" stroke-width=".8"/><path d="M1286.500 133.500H1304V116" fill="none" stroke="#7a7a7a" stroke-width="1"/>
 <rect x="1291" y="124" width="10" height="8" fill="#8a8a8a"/><path d="M1293.500 124V121.500C1293.500 118.500 1299.500 118.500 1299.500 121.500" fill="none" stroke="#e8e8e8" stroke-width="1.600"/><path d="M1296 131V126.500M1294.500 128L1296 126.500L1297.500 128" stroke="#000" stroke-width="1" fill="none"/>
 <rect x="1306" y="116" width="16.500" height="17.500" fill="#ececec"/>
 <path d="M1308 117V133H1322" fill="none" stroke="#000" stroke-width="1" stroke-dasharray="1.500 1"/>
 <path d="M1321 118L1312 127L1311 123.500L1308.500 129.500L1315 128L1312 127" fill="#000" stroke="#000" stroke-width="1.500"/>
 <rect x="1324" y="116" width="17" height="17.500" fill="#f0e8d0" stroke="#f8f8f8" stroke-width=".8"/>
 <use href="#bulb" x="1332.500" y="123.500"/>
 <!-- reliefs row -->
 <use href="#stack" x="1104" y="249"/>
 <use href="#fold" x="1130" y="249"/>
 <use href="#flop" x="1157.500" y="250.500"/>
 <use href="#brown" x="1185" y="249"/>
 <path d="M1213.500 258L1221 253.500L1229 258L1221 263.500Z" fill="#c01818"/><path d="M1213.500 253L1221 249L1229 253L1221 257.500Z" fill="#7088e0"/><path d="M1221 255V261M1219 259L1221 261.500L1223 259" stroke="#f8c020" stroke-width="1.400" fill="none"/>
 <rect x="1242.500" y="249" width="11.500" height="16" fill="#7090c8"/><use href="#bulb" x="1248.300" y="256.500" transform="translate(1248.300 256.500) scale(.75) translate(-1248.300 -256.500)"/>
 <rect x="1270" y="250" width="14.500" height="14.500" fill="#0a0a0a"/><circle cx="1277.200" cy="255" r="3" fill="#a0a0a0"/><circle cx="1274" cy="252.500" r="1.300" fill="#a0a0a0"/><circle cx="1280.500" cy="252.500" r="1.300" fill="#a0a0a0"/><ellipse cx="1277.200" cy="260.500" rx="4" ry="3.500" fill="#b0b0b0"/>
 <use href="#bucket" x="1298" y="250.500"/>
 <rect x="1322.500" y="248" width="18" height="18" fill="#fdf4d0" stroke="#e0d8b0" stroke-width=".6"/>
 <use href="#bulb" x="1329" y="256" transform="translate(1329 256) scale(.9) translate(-1329 -256)"/><use href="#bulb" x="1335.500" y="254.500" transform="translate(1335.500 254.500) scale(.9) translate(-1335.500 -254.500)"/>
 <!-- relief layer row -->
 <path d="M1113 286C1113 278 1121 274 1128 277C1131 278.500 1133 281 1132.500 284L1127 287C1127 282 1121 280 1117 284Z" fill="#c8b868" stroke="#8a7a38" stroke-width=".6"/>
 <path d="M1113 286C1115 281 1122 280 1126 287Z" fill="#8898c8"/>
 <path d="M1111 290.500H1118M1114.500 287V294" stroke="#000" stroke-width="1"/>
 <rect x="1323.500" y="274" width="17" height="17.500" fill="#f0e8d0" stroke="#fafafa" stroke-width=".8"/><path d="M1323.500 291.500H1340.500V274" fill="none" stroke="#a8a8a8" stroke-width=".8"/>
 <use href="#bulb" x="1332" y="281.500"/>
</g>
<path d="M1139.500 279.500L1143.500 283.500L1139.500 287.500Z" fill="#000"/>
</svg>
<style>
.tex{position:absolute;background:#cfcfcf}
.tab{position:absolute;font-size:12px;white-space:nowrap}
.sbx{position:absolute;top:751px;height:17px;border-left:1px solid #a0a0a0;border-top:1px solid #a0a0a0;font-size:11.5px;letter-spacing:-0.47px;line-height:14px;padding-left:2px;white-space:nowrap}
</style>
<svg width="0" height="0" style="left:0;top:0"><defs>
<filter id="noise" x="0" y="0" width="100%" height="100%" color-interpolation-filters="sRGB"><feTurbulence type="fractalNoise" baseFrequency="0.28 0.14" numOctaves="3" seed="7"/><feColorMatrix type="matrix" values="0.3 0 0 0 0.695  0.3 0 0 0 0.695  0.3 0 0 0 0.695  0 0 0 0 1"/></filter>
</defs></svg>
<!-- left tabs -->
<div class="abs" style="left:0;top:721px;width:271px;height:1px;background:#a0a0a0"></div>
<div class="abs" style="left:0;top:722px;width:271px;height:25px;background:#d9d9d9;border-right:1px solid #a0a0a0"></div>
<svg style="left:0;top:722px" width="270" height="25"><rect width="270" height="25" fill="#c4c4c4" filter="url(#noise)"/></svg>
<div class="abs" style="left:0;top:747px;width:1366px;height:1px;background:#a8a8a8"></div>
<svg style="left:0;top:720px" width="272" height="28">
 <path d="M0 1H59.500 C62 1 62.500 2 62.500 5 V19 C62.500 23 61 25.500 57 25.500 H0Z" fill="#f0f0f0"/>
 <path d="M62.500 2.500H125 C127.500 2.500 128.500 3.500 128.500 6 V20 C128.500 23.500 126.500 25.500 123 25.500 H57 C61 25.500 62.500 23 62.500 19Z" fill="#f5f5f5" stroke="#a0a0a0" stroke-width="1"/>
 <path d="M0 25.500H57 C61 25.500 62.500 23 62.500 19" fill="none" stroke="#a0a0a0"/>
</svg>
<div class="tab" style="left:8px;top:726px;letter-spacing:-0.2px">Assistant</div>
<div class="tab" style="left:70px;top:727px">Toolpaths</div>
<!-- right tabs -->
<div class="abs" style="left:1094px;top:721px;width:272px;height:1px;background:#a0a0a0"></div>
<div class="abs" style="left:1094px;top:722px;width:272px;height:25px;background:#d9d9d9"></div>
<svg style="left:1094px;top:722px" width="272" height="25"><rect width="272" height="25" fill="#c4c4c4" filter="url(#noise)"/></svg>
<svg style="left:1094px;top:720px" width="272" height="28">
 <path d="M0 1H47 C49.500 1 50 2 50 5 V19 C50 23 48.500 25.500 44.500 25.500 H0Z" fill="#f0f0f0"/>
 <path d="M50 2.500H94 C96.500 2.500 97.500 3.500 97.500 6 V20 C97.500 23.500 95.500 25.500 92 25.500 H44.500 C48.500 25.500 50 23 50 19Z" fill="#f5f5f5" stroke="#a0a0a0" stroke-width="1"/>
 <path d="M0 25.500H44.500 C48.500 25.500 50 23 50 19" fill="none" stroke="#a0a0a0"/>
</svg>
<div class="tab" style="left:1103px;top:727px;font-size:11.5px;letter-spacing:-0.4px">Layers</div>
<div class="tab" style="left:1151px;top:727px">Add In</div>
<!-- status bar -->
<div class="abs" style="left:0;top:748px;width:1366px;height:20px;background:#f0f0f0"></div>
<div class="abs" style="left:1365px;top:44px;width:1px;height:678px;background:#8c8c8c"></div>
<div class="sbx" style="left:1023px;width:66px">X: 1846.608</div>
<div class="sbx" style="left:1092px;width:66px">Y: 315.361</div>
<div class="sbx" style="left:1161px;width:60px"></div>
<div class="sbx" style="left:1224px;width:70px"></div>
<div class="sbx" style="left:1297px;width:69px"></div>
</body></html>
